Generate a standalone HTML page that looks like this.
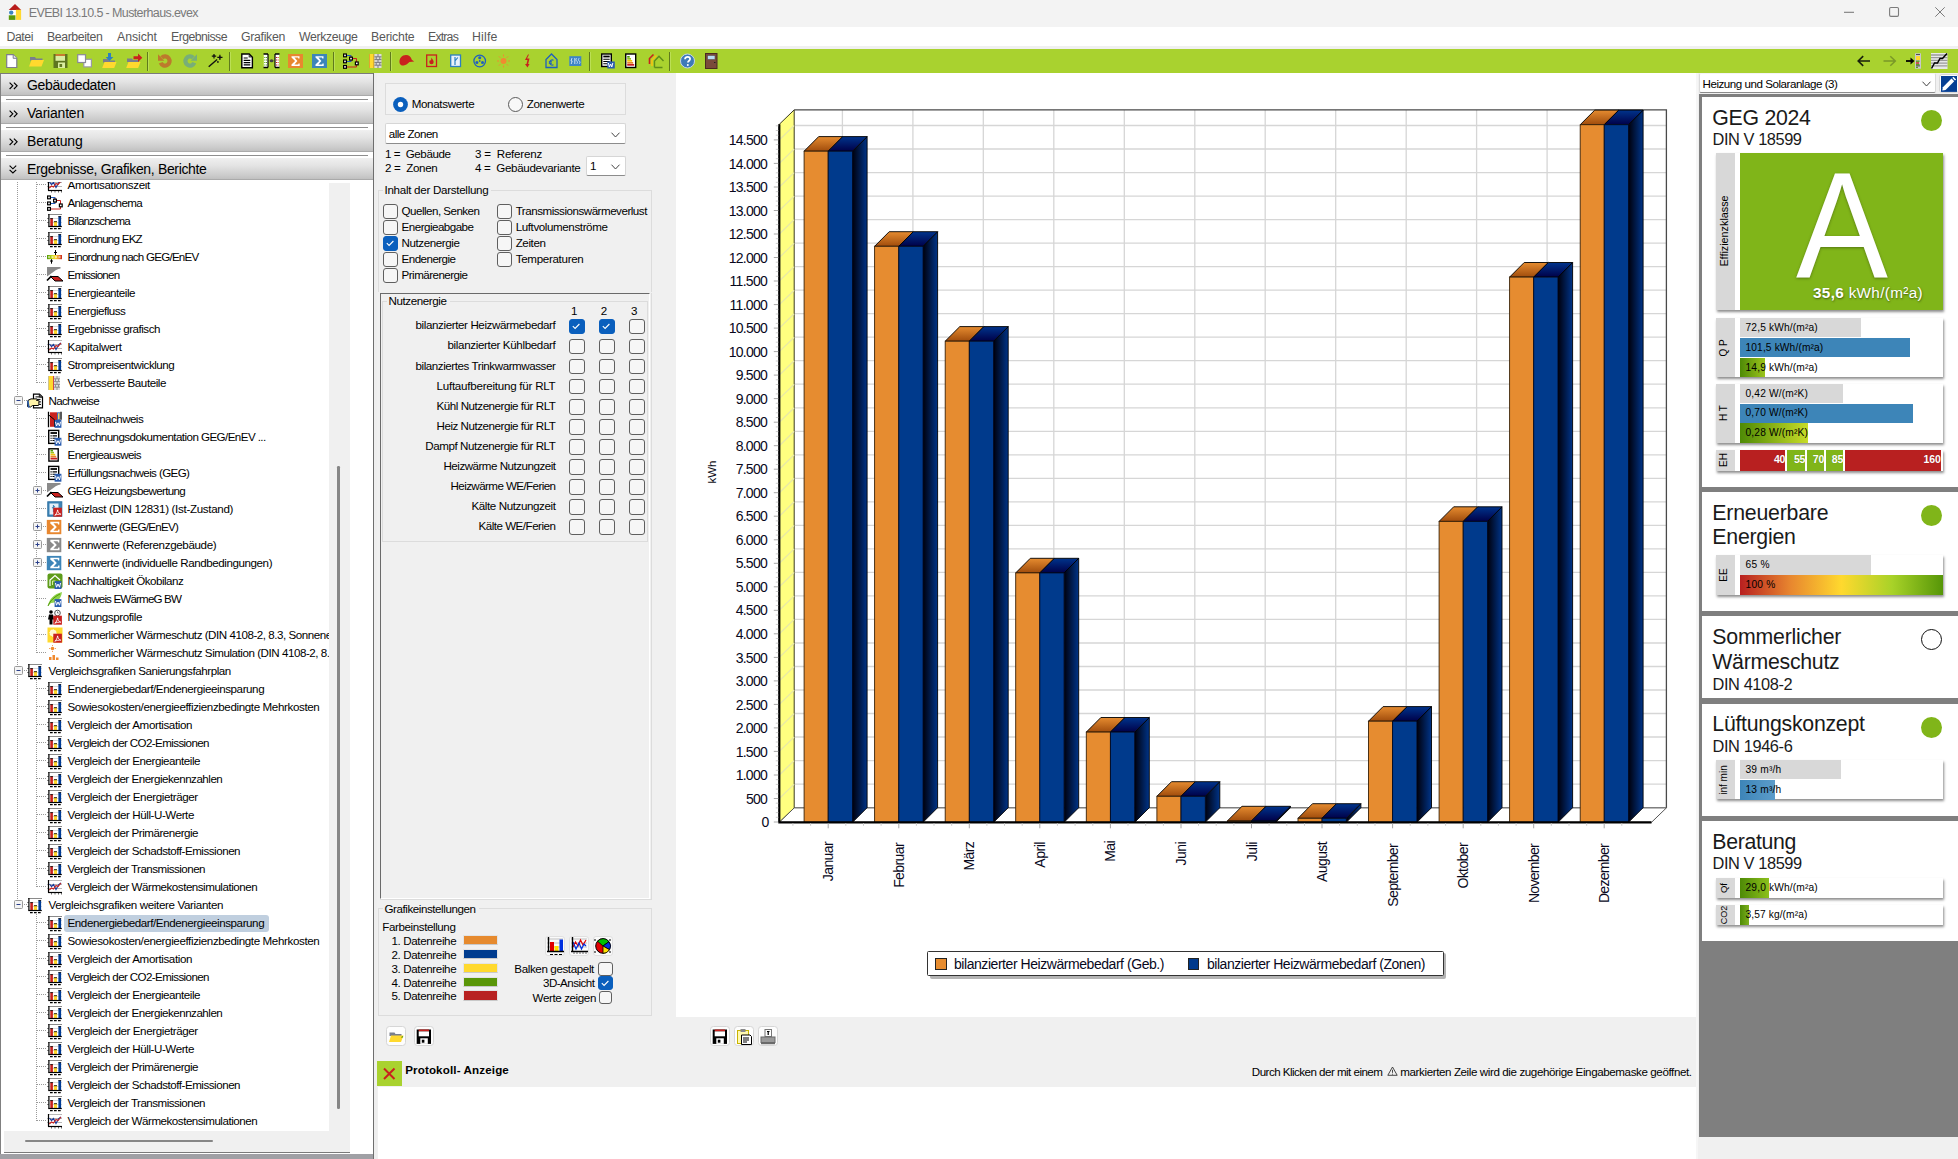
<!DOCTYPE html>
<html lang="de"><head><meta charset="utf-8"><title>EVEBI 13.10.5 - Musterhaus.evex</title>
<style>
html,body{margin:0;padding:0}
body{width:1958px;height:1159px;overflow:hidden;background:#f0f0f0;position:relative;font-family:"Liberation Sans",sans-serif;font-size:11px;color:#000}
.a{position:absolute;box-sizing:border-box}
.t{position:absolute;white-space:pre;}
svg{overflow:visible}
.cb{position:absolute;box-sizing:border-box;width:14px;height:14px;border:1px solid #5f5f5f;border-radius:3px;background:#f6f6f6}
.cb.on{background:#0a5fbd;border-color:#0a5fbd}
.gb{position:absolute;box-sizing:border-box;border:1px solid #dcdcdc}
</style></head>
<body>
<!-- frame -->
<div class="a " style="left:0.0px;top:0.0px;width:1958.0px;height:27.4px;background:#f3f3f3"></div>
<svg class="a" style="left:8.0px;top:3.0px;" width="14" height="18" viewBox="0 0 14 18"><rect x="0.800" y="6.800" width="7.100" height="5.500" fill="#fff"/><polygon points="0.700,6.900 7,1 13.200,6.900" fill="#b81c1c"/><rect x="7.900" y="6.800" width="5.200" height="10.100" fill="#ffd92e"/><rect x="0.800" y="12.300" width="6.600" height="4.600" fill="#5a9a08"/><circle cx="3.200" cy="9.600" r="2.200" fill="#3d85c0"/></svg>
<span class="t " style="left:28.7px;top:4.6px;font-size:12.5px;line-height:16px;color:#7a7a7a;letter-spacing:-0.613px;">EVEBI 13.10.5 - Musterhaus.evex</span>
<svg class="a" style="left:1840.0px;top:4.0px;" width="112" height="18" viewBox="0 0 112 18"><path d="M4 8.300H14" stroke="#7c7c7c" stroke-width="1.100" fill="none"/><rect x="49.600" y="3.500" width="8.900" height="8.900" fill="none" stroke="#7c7c7c" stroke-width="1.100" rx="1.300"/><path d="M95.300 3.300l9.400 9.400M104.700 3.300l-9.400 9.400" stroke="#7c7c7c" stroke-width="1" fill="none"/></svg>
<div class="a " style="left:0.0px;top:27.4px;width:1958.0px;height:19.0px;background:#fff"></div>
<div class="a " style="left:0.0px;top:46.4px;width:1958.0px;height:2.6px;background:#f0f0f0"></div>
<span class="t " style="left:6.5px;top:29.3px;font-size:12.3px;line-height:16px;color:#585858;letter-spacing:-0.443px;">Datei</span>
<span class="t " style="left:47.0px;top:29.3px;font-size:12.3px;line-height:16px;color:#585858;letter-spacing:-0.400px;">Bearbeiten</span>
<span class="t " style="left:117.0px;top:29.3px;font-size:12.3px;line-height:16px;color:#585858;letter-spacing:-0.048px;">Ansicht</span>
<span class="t " style="left:171.0px;top:29.3px;font-size:12.3px;line-height:16px;color:#585858;letter-spacing:-0.554px;">Ergebnisse</span>
<span class="t " style="left:241.0px;top:29.3px;font-size:12.3px;line-height:16px;color:#585858;letter-spacing:-0.311px;">Grafiken</span>
<span class="t " style="left:299.0px;top:29.3px;font-size:12.3px;line-height:16px;color:#585858;letter-spacing:-0.388px;">Werkzeuge</span>
<span class="t " style="left:371.0px;top:29.3px;font-size:12.3px;line-height:16px;color:#585858;letter-spacing:-0.203px;">Berichte</span>
<span class="t " style="left:428.0px;top:29.3px;font-size:12.3px;line-height:16px;color:#585858;letter-spacing:-0.810px;">Extras</span>
<span class="t " style="left:472.0px;top:29.3px;font-size:12.3px;line-height:16px;color:#585858;letter-spacing:0.179px;">Hilfe</span>
<div class="a " style="left:0.0px;top:49.0px;width:1958.0px;height:24.0px;background:#a9d22f"></div>
<div class="a " style="left:147.0px;top:51.5px;width:1.1px;height:19.5px;background:#5f7a1c"></div>
<div class="a " style="left:148.1px;top:51.5px;width:1.0px;height:19.5px;background:#bbdf55"></div>
<div class="a " style="left:229.0px;top:51.5px;width:1.1px;height:19.5px;background:#5f7a1c"></div>
<div class="a " style="left:230.1px;top:51.5px;width:1.0px;height:19.5px;background:#bbdf55"></div>
<div class="a " style="left:333.2px;top:51.5px;width:1.1px;height:19.5px;background:#5f7a1c"></div>
<div class="a " style="left:334.3px;top:51.5px;width:1.0px;height:19.5px;background:#bbdf55"></div>
<div class="a " style="left:390.0px;top:51.5px;width:1.1px;height:19.5px;background:#5f7a1c"></div>
<div class="a " style="left:391.1px;top:51.5px;width:1.0px;height:19.5px;background:#bbdf55"></div>
<div class="a " style="left:589.0px;top:51.5px;width:1.1px;height:19.5px;background:#5f7a1c"></div>
<div class="a " style="left:590.1px;top:51.5px;width:1.0px;height:19.5px;background:#bbdf55"></div>
<div class="a " style="left:669.0px;top:51.5px;width:1.1px;height:19.5px;background:#5f7a1c"></div>
<div class="a " style="left:670.1px;top:51.5px;width:1.0px;height:19.5px;background:#bbdf55"></div>
<!-- toolbar -->
<svg class="a" style="left:5.5px;top:53.0px;" width="16" height="16" viewBox="0 0 16 16"><path d="M0.7 1.7h6.5l3.6 3.6v9.2h-10.1z" fill="#fff" stroke="#7d7d8c" stroke-width="1.2"/><path d="M7.2 1.7v3.6h3.6" fill="#e8e8ee" stroke="#7d7d8c" stroke-width="1"/></svg>
<svg class="a" style="left:28.5px;top:53.0px;" width="16" height="16" viewBox="0 0 16 16"><path d="M1 4h5l1 1.5h6.5v2h-12.5z" fill="#7a7f8c"/><path d="M2.5 7h12.5l-2.5 6.5h-12.5z" fill="#ffd92e"/></svg>
<svg class="a" style="left:52.5px;top:53.0px;" width="16" height="16" viewBox="0 0 16 16"><rect x="0.5" y="1" width="14" height="14" fill="#5e7520"/><rect x="2.5" y="1" width="9.5" height="2" fill="#c87a30"/><rect x="2.5" y="3" width="9.5" height="4.8" fill="#d9eda0"/><rect x="5" y="9.5" width="7" height="5.5" fill="#d9eda0"/><rect x="6.5" y="11" width="2.6" height="3" fill="#5e7520"/></svg>
<svg class="a" style="left:77.0px;top:53.0px;" width="16" height="16" viewBox="0 0 16 16"><rect x="6.8" y="6.3" width="7.6" height="7.6" fill="#fff" stroke="#9a9aa4" stroke-width="1.2"/><rect x="0.7" y="1.7" width="7.8" height="7.8" fill="#fff" stroke="#8a8a96" stroke-width="1.2"/></svg>
<svg class="a" style="left:101.5px;top:53.0px;" width="16" height="16" viewBox="0 0 16 16"><path d="M1 6h5l1 1.5h6v2h-12z" fill="#7a7f8c"/><path d="M2.5 9h12l-2.3 6h-12z" fill="#ffd92e"/><path d="M6 0h3v4h2.4l-3.9 4l-3.9-4h2.4z" fill="#2d7fc1"/></svg>
<svg class="a" style="left:126.0px;top:53.0px;" width="16" height="16" viewBox="0 0 16 16"><path d="M1 5.5h5l1 1.5h6v2h-12z" fill="#7a7f8c"/><path d="M2.5 9h12l-2.3 6h-12z" fill="#ffd92e"/><path d="M7.5 3.2h4.5v-2.7l4.3 4.2l-4.3 4.2v-2.7h-4.5z" fill="#c9211e"/></svg>
<svg class="a" style="left:158.1px;top:54.1px;" width="14" height="14" viewBox="0 0 14 14"><path d="M3.750 3.750A4.600 4.600 0 1 1 2.700 8.800" fill="none" stroke="#bd7a2c" stroke-width="4.200"/><path d="M0 0.300v6.500h6.200z" fill="#bd7a2c"/></svg>
<svg class="a" style="left:183.2px;top:54.1px;" width="14" height="14" viewBox="0 0 14 14"><path d="M10.250 3.750A4.600 4.600 0 1 0 11.300 8.800" fill="none" stroke="#78ae78" stroke-width="4.200"/><path d="M14 0.300v6.500h-6.200z" fill="#78ae78"/></svg>
<svg class="a" style="left:207.5px;top:53.0px;" width="16" height="16" viewBox="0 0 16 16"><path d="M0.700 13.800l8.400-7.300" stroke="#111" stroke-width="1.400"/><path d="M6 1v4.400M3.800 3.200h4.400M11.900 1.800v5.200M9.300 4.400h5.200" stroke="#111" stroke-width="1.200"/><path d="M6 1.800l.7 .7l-.7 .7l-.7-.7zM11.900 3l1.400 1.400l-1.400 1.400l-1.400-1.400z" fill="#111"/><circle cx="9.900" cy="8.900" r=".9" fill="#111"/></svg>
<svg class="a" style="left:241.0px;top:53.0px;" width="16" height="16" viewBox="0 0 16 16"><path d="M0.8 1h7.4l3.2 3.2v10.5h-10.6z" fill="#fff" stroke="#000" stroke-width="1.4"/><path d="M2.7 5h4M2.7 7.3h6.6M2.7 9.6h6.6M2.7 11.9h6.6" stroke="#000" stroke-width="1.2"/><path d="M7.6 1.2l3.4 3.4h-3.4z" fill="#444"/></svg>
<svg class="a" style="left:262.5px;top:53.0px;" width="17" height="16" viewBox="0 0 17 16"><rect x="0.8" y="1" width="4.2" height="13.5" fill="#fff"/><path d="M0.5 1h4.5M0.5 14.5h4.5" stroke="#000" stroke-width="1.4"/><path d="M5 1v13.5" stroke="#000" stroke-width="1.2"/><path d="M1.3 4.5h3M1.3 7h3M1.3 9.5h3M1.3 12h3" stroke="#4e9a06" stroke-width="1.2" stroke-dasharray="1 0.6"/><ellipse cx="8.6" cy="7.7" rx="2" ry="1.5" fill="#444"/><rect x="12" y="1" width="4.2" height="13.5" fill="#fff"/><path d="M12 1h4.5M12 14.5h4.5" stroke="#000" stroke-width="1.4"/><path d="M12 1v13.5" stroke="#000" stroke-width="1.2"/><path d="M13 4.5h3M13 7h3M13 9.5h3M13 12h3" stroke="#c9211e" stroke-width="1.2" stroke-dasharray="1 0.6"/></svg>
<svg class="a" style="left:288.0px;top:53.0px;" width="16" height="16" viewBox="0 0 16 16"><rect x="0" y="1" width="15" height="14" fill="#e8872f"/><path d="M3.5 3.2h8v2.2h-1.2l-.3-.9h-3.6l3 3.5l-3 3.6h3.8l.3-1h1.2v2.3h-8.2v-1.4l3.6-3.6l-3.6-3.4z" fill="#fff"/></svg>
<svg class="a" style="left:312.0px;top:53.0px;" width="16" height="16" viewBox="0 0 16 16"><rect x="0" y="1" width="15" height="14" fill="#3d85b8"/><path d="M3.5 3.2h8v2.2h-1.2l-.3-.9h-3.6l3 3.5l-3 3.6h3.8l.3-1h1.2v2.3h-8.2v-1.4l3.6-3.6l-3.6-3.4z" fill="#fff"/></svg>
<svg class="a" style="left:343.0px;top:53.0px;" width="16" height="16" viewBox="0 0 16 16"><path d="M2 2.5h6v3.5M2 8.5h6v-3M8 5.5h5.5v5M2 14h11.5v-3.5" fill="none" stroke="#c9211e" stroke-width="1"/><path d="M2 2.5h6v3.5M2 8.5h6v-2.5" fill="none" stroke="#1f5fbf" stroke-width="1"/><g fill="#fff" stroke="#000" stroke-width="1.2"><rect x="0.6" y="1" width="2.8" height="2.8"/><rect x="0.6" y="7" width="2.8" height="2.8"/><rect x="0.6" y="12.5" width="2.8" height="2.8"/><rect x="6.6" y="4.2" width="2.8" height="2.8"/><rect x="12.4" y="9" width="2.8" height="2.8"/></g></svg>
<svg class="a" style="left:368.5px;top:53.0px;" width="13" height="16" viewBox="0 0 13 16"><rect x="0" y="1" width="0.800" height="14" fill="#e8872f"/><rect x="0.800" y="1" width="3.700" height="14" fill="#ffd92e"/><rect x="4.500" y="1" width="0.900" height="14" fill="#e8872f"/><rect x="5.400" y="1" width="7.100" height="14" fill="#dcdcdc"/><path d="M5.400 3.800h7.100M5.400 6.600h7.100M5.400 9.400h7.100M5.400 12.200h7.100M9 1v2.800M7.200 3.800v2.800M10.800 3.800v2.800M9 6.600v2.800M7.200 9.400v2.800M10.800 9.400v2.800M9 12.200v2.800" stroke="#7a7a82" stroke-width="1"/></svg>
<svg class="a" style="left:399.0px;top:53.0px;" width="15" height="16" viewBox="0 0 15 16"><path d="M0.5 9.5c-.5-4 2.5-7.5 6.5-7.5c3 0 5 2 5.8 4.8l2.4 1.6l-4.7.6c-1.500 1.500-3.5 3-6 3.500c-1.500.3-3.700-.500-4-3z" fill="#c9211e"/></svg>
<svg class="a" style="left:425.5px;top:53.0px;" width="12" height="16" viewBox="0 0 12 16"><rect x="0.7" y="2" width="9.800" height="11.500" fill="#a9d22f" stroke="#c9211e" stroke-width="1.300"/><path d="M5.500 4.500c.3 1.500 2.200 2.500 2.200 4.500a2.200 2.200 0 0 1-4.400 0c0-1 .6-1.600.9-2.300c.3.600.5.900.8 1c.2-1.200.2-2.200.5-3.200z" fill="#c9211e"/></svg>
<svg class="a" style="left:449.5px;top:53.0px;" width="12" height="16" viewBox="0 0 12 16"><rect x="0.7" y="2" width="9.800" height="11.500" fill="#e9f2fa" stroke="#2d7fc1" stroke-width="1.300"/><path d="M5 4v8M5 8l2.800-3.500" stroke="#2d7fc1" stroke-width="1.200" fill="none"/></svg>
<svg class="a" style="left:472.5px;top:53.0px;" width="14" height="16" viewBox="0 0 14 16"><circle cx="6.700" cy="8" r="5.800" fill="none" stroke="#1f5fbf" stroke-width="1.300"/><circle cx="6.700" cy="4.800" r="1.500" fill="#1f5fbf"/><circle cx="3.900" cy="9.500" r="1.500" fill="#1f5fbf"/><circle cx="9.500" cy="9.500" r="1.500" fill="#1f5fbf"/><circle cx="6.700" cy="8" r=".9" fill="#1f5fbf"/></svg>
<svg class="a" style="left:496.5px;top:53.0px;" width="13" height="16" viewBox="0 0 13 16"><circle cx="6.500" cy="8" r="3" fill="#f08a30"/><path d="M6.500 1.500v2M6.500 12.500v2M0 8h2M11 8h2M1.900 3.400l1.400 1.400M9.700 11.200l1.400 1.400M1.900 12.600l1.400-1.400M9.700 4.800l1.400-1.400" stroke="#f08a30" stroke-width="1"/></svg>
<svg class="a" style="left:523.0px;top:53.0px;" width="9" height="16" viewBox="0 0 9 16"><path d="M5 1.500l-3 5.500h2.500l-1 4h-1.500l2.500 3.500l2-3.500h-1.400l1.400-5.500h-2.500l2-4z" fill="#c9211e"/></svg>
<svg class="a" style="left:544.5px;top:53.0px;" width="13" height="16" viewBox="0 0 13 16"><path d="M1 14.500v-8l5.500-5.500l5.500 5.500v8z" fill="none" stroke="#1f5fbf" stroke-width="1.300"/><path d="M8.500 7.200a2.600 2.600 0 1 0 0 4.600M3.800 8.800h3.200M3.800 10.200h3.200" fill="none" stroke="#1f5fbf" stroke-width="1.100"/></svg>
<svg class="a" style="left:569.0px;top:53.0px;" width="13" height="16" viewBox="0 0 13 16"><rect x="0.300" y="3.200" width="12" height="9.800" fill="#3d85c6"/><path d="M3 5l-1 3h1.200l-1 3M5.800 5v6M7.700 5.200c-1 .8-1 2 0 2.800s1 2 0 2.800M10.200 5.200c-1 .8-1 2 0 2.800s1 2 0 2.800" stroke="#d8e8f6" stroke-width=".9" fill="none"/></svg>
<svg class="a" style="left:601.0px;top:53.0px;" width="14" height="16" viewBox="0 0 14 16"><rect x="0.700" y="1" width="9.600" height="12.500" fill="#fff" stroke="#000" stroke-width="1.400"/><path d="M2.300 3.500h6.400" stroke="#000" stroke-width="1.800"/><path d="M2.300 6.300h6.400M2.300 8.500h6.400M2.300 10.700h4" stroke="#000" stroke-width="1.100"/><rect x="6.300" y="8.500" width="7.500" height="7" fill="#2a5db0"/><path d="M7.400 10l1 4l1.200-3l1.200 3l1-4" fill="none" stroke="#fff" stroke-width="1"/></svg>
<svg class="a" style="left:624.5px;top:53.0px;" width="12" height="16" viewBox="0 0 12 16"><rect x="0.700" y="1" width="10" height="13.500" fill="#fff" stroke="#000" stroke-width="1.400"/><rect x="2.200" y="3" width="2.500" height="1.700" fill="#4e9a06"/><rect x="2.200" y="5" width="3.800" height="1.700" fill="#9ac31c"/><rect x="2.200" y="7" width="5" height="1.700" fill="#f5c211"/><rect x="2.200" y="9" width="6" height="1.700" fill="#e8872f"/><rect x="2.200" y="11" width="7" height="1.700" fill="#c9211e"/></svg>
<svg class="a" style="left:647.5px;top:53.0px;" width="16" height="16" viewBox="0 0 16 16"><path d="M1.500 11v-5.500l4-4" fill="none" stroke="#c9211e" stroke-width="1.600"/><path d="M4 13v-6l4.500-4.500" fill="none" stroke="#f5c211" stroke-width="1.600"/><path d="M6.500 14.500v-6.500l4.500-4.800l4.500 4.800M6.500 14.500h8" fill="none" stroke="#5e8c1a" stroke-width="1.400"/></svg>
<svg class="a" style="left:679.5px;top:53.0px;" width="15" height="16" viewBox="0 0 15 16"><circle cx="7.500" cy="8" r="7" fill="#3d7ab8" stroke="#c5d5e8" stroke-width="1"/><path d="M5 6.300c0-1.600 1.200-2.500 2.600-2.500s2.500.900 2.500 2.200c0 1.700-2.200 1.800-2.200 3.600" fill="none" stroke="#fff" stroke-width="1.700"/><circle cx="7.800" cy="12" r="1" fill="#fff"/></svg>
<svg class="a" style="left:704.5px;top:53.0px;" width="12" height="16" viewBox="0 0 12 16"><rect x="0.500" y="0.500" width="11.500" height="15" fill="#7a4a3a" stroke="#4a2a20" stroke-width="1"/><rect x="2.500" y="2.500" width="7.500" height="4" fill="#b8dcf0" stroke="#5a4a4a" stroke-width=".6"/><path d="M9 9.500h1.500" stroke="#222" stroke-width="1"/></svg>
<svg class="a" style="left:1857.0px;top:54.0px;" width="14" height="14" viewBox="0 0 14 14"><path d="M13 7h-11.500M6.200 2.200l-5 4.800l5 4.800" fill="none" stroke="#18200c" stroke-width="1.600"/></svg>
<svg class="a" style="left:1882.5px;top:54.0px;" width="14" height="14" viewBox="0 0 14 14"><path d="M0.500 7h11.500M7.300 2.200l5 4.800l-5 4.800" fill="none" stroke="#7a9828" stroke-width="1.500"/></svg>
<svg class="a" style="left:1905.5px;top:53.0px;" width="16" height="16" viewBox="0 0 16 16"><path d="M0 8h5.500" stroke="#000" stroke-width="1.800"/><path d="M4.500 4.500l4 3.500l-4 3.500z" fill="#000"/><rect x="9" y="0.300" width="6" height="15.400" fill="#c8c8cc"/><rect x="10" y="3" width="4" height="4" fill="#ffd92e"/><rect x="10" y="7.500" width="3.500" height="1.400" fill="#5aa020"/><rect x="10" y="9.300" width="3" height="1.400" fill="#c9211e"/><rect x="10" y="11" width="3.500" height="1.400" fill="#5aa020"/><rect x="10" y="13.800" width="2" height="1.200" fill="#5aa020"/><path d="M10 1.500h4M10 12.900h4" stroke="#444" stroke-width=".9"/></svg>
<svg class="a" style="left:1931.0px;top:53.0px;" width="17" height="16" viewBox="0 0 17 16"><rect x="0" y="0" width="16.500" height="16" fill="#e8e8e8"/><path d="M0 2h16.500M0 4.700h16.500M0 7.400h16.500M0 10.100h16.500M0 12.800h16.500" stroke="#9a9a9a" stroke-width="1.300"/><path d="M0.500 15.500l3-5.500h3l2.500-4.500h2.500l4.500-5" fill="none" stroke="#000" stroke-width="1.500"/></svg>
<!-- left -->
<div class="a " style="left:0.0px;top:73.0px;width:373.0px;height:1086.0px;background:#fff"></div>
<div class="a " style="left:0.0px;top:73.0px;width:1.2px;height:1086.0px;background:#808080"></div>
<div class="a " style="left:373.0px;top:73.0px;width:1.1px;height:1086.0px;background:#6e6e6e"></div>
<div class="a " style="left:374.1px;top:73.0px;width:3.3px;height:1086.0px;background:#eeeeee"></div>
<div class="a " style="left:0.0px;top:73.0px;width:373.0px;height:1.3px;background:#7a7a7a"></div>
<div class="a " style="left:1.2px;top:74.0px;width:371.5px;height:21.8px;background:linear-gradient(#f0f0f0,#e4e4e4 35%,#cacaca 85%,#c0c0c0);border-bottom:1px solid #aaaaaa"></div>
<svg class="a" style="left:8.8px;top:81.5px;" width="9" height="8" viewBox="0 0 9 8"><path d="M0.600 0.600l3.200 3.200l-3.200 3.200M4.900 0.600l3.200 3.200l-3.200 3.200" fill="none" stroke="#000" stroke-width="1.150"/></svg>
<span class="t " style="left:27.0px;top:75.5px;font-size:14px;line-height:18px;color:#000;letter-spacing:-0.354px;">Gebäudedaten</span>
<div class="a " style="left:1.2px;top:102.0px;width:371.5px;height:21.8px;background:linear-gradient(#f0f0f0,#e4e4e4 35%,#cacaca 85%,#c0c0c0);border-bottom:1px solid #aaaaaa"></div>
<svg class="a" style="left:8.8px;top:109.5px;" width="9" height="8" viewBox="0 0 9 8"><path d="M0.600 0.600l3.200 3.200l-3.200 3.200M4.900 0.600l3.200 3.200l-3.200 3.200" fill="none" stroke="#000" stroke-width="1.150"/></svg>
<span class="t " style="left:27.0px;top:103.5px;font-size:14px;line-height:18px;color:#000;letter-spacing:-0.210px;">Varianten</span>
<div class="a " style="left:1.2px;top:130.0px;width:371.5px;height:21.8px;background:linear-gradient(#f0f0f0,#e4e4e4 35%,#cacaca 85%,#c0c0c0);border-bottom:1px solid #aaaaaa"></div>
<svg class="a" style="left:8.8px;top:137.5px;" width="9" height="8" viewBox="0 0 9 8"><path d="M0.600 0.600l3.200 3.200l-3.200 3.200M4.900 0.600l3.200 3.200l-3.200 3.200" fill="none" stroke="#000" stroke-width="1.150"/></svg>
<span class="t " style="left:27.0px;top:131.5px;font-size:14px;line-height:18px;color:#000;letter-spacing:-0.165px;">Beratung</span>
<div class="a " style="left:1.2px;top:158.0px;width:371.5px;height:21.8px;background:linear-gradient(#f0f0f0,#e4e4e4 35%,#cacaca 85%,#c0c0c0);border-bottom:1px solid #aaaaaa"></div>
<svg class="a" style="left:9.2px;top:165.0px;" width="8" height="9" viewBox="0 0 8 9"><path d="M0.600 0.600l3.300 3.200l3.300-3.200M0.600 4.800l3.300 3.200l3.300-3.200" fill="none" stroke="#000" stroke-width="1.150"/></svg>
<span class="t " style="left:27.0px;top:159.5px;font-size:14px;line-height:18px;color:#000;letter-spacing:-0.346px;">Ergebnisse, Grafiken, Berichte</span>
<div class="a " style="left:6.0px;top:99.0px;width:362.0px;height:1.2px;background:#8e8e8e"></div>
<div class="a " style="left:6.0px;top:127.0px;width:362.0px;height:1.2px;background:#8e8e8e"></div>
<div class="a " style="left:6.0px;top:155.0px;width:362.0px;height:1.2px;background:#8e8e8e"></div>
<div class="a " style="left:0.0px;top:182.0px;width:329.0px;height:949.0px;overflow:hidden"><div class="a " style="left:17.0px;top:0.0px;width:1.0px;height:723.0px;background-image:linear-gradient(to bottom,#9a9a9a 50%,transparent 50%);background-size:1px 2px"></div><div class="a " style="left:36.0px;top:0.0px;width:1.0px;height:201.0px;background-image:linear-gradient(to bottom,#9a9a9a 50%,transparent 50%);background-size:1px 2px"></div><div class="a " style="left:36.0px;top:228.0px;width:1.0px;height:243.0px;background-image:linear-gradient(to bottom,#9a9a9a 50%,transparent 50%);background-size:1px 2px"></div><div class="a " style="left:36.0px;top:498.0px;width:1.0px;height:207.0px;background-image:linear-gradient(to bottom,#9a9a9a 50%,transparent 50%);background-size:1px 2px"></div><div class="a " style="left:36.0px;top:732.0px;width:1.0px;height:207.0px;background-image:linear-gradient(to bottom,#9a9a9a 50%,transparent 50%);background-size:1px 2px"></div><div class="a " style="left:37.0px;top:2.0px;width:9.0px;height:1.0px;background-image:linear-gradient(to right,#9a9a9a 50%,transparent 50%);background-size:2px 1px"></div><svg class="a" style="left:47.0px;top:-5.0px;" width="16" height="16" viewBox="0 0 16 16"><g transform="translate(0,1)"><path d="M1 0.500h14M0 4.500h15M0 8.500h15" stroke="#b8b8b8" stroke-width="1"/><path d="M2.500 4l2 2.500l2-2l2.500 5l2.500-4.500l2.500-2" fill="none" stroke="#1a3c9c" stroke-width="1.200"/><path d="M2.300 10l2.200-2l2 1l2.500-3.500l2 1l3-3.500" fill="none" stroke="#c9211e" stroke-width="1.100"/><path d="M1.500 0v12.500" stroke="#000" stroke-width="1.200"/><path d="M1 12.500h14" stroke="#000" stroke-width="1.200"/><path d="M4.500 13v1.500M8 13v1.500M11.500 13v1.500M14.500 13v1.500" stroke="#666" stroke-width="1"/></g></svg><span class="t " style="left:67.5px;top:-5.0px;font-size:11.6px;line-height:15px;color:#000;letter-spacing:-0.342px;">Amortisationszeit</span><div class="a " style="left:37.0px;top:20.0px;width:9.0px;height:1.0px;background-image:linear-gradient(to right,#9a9a9a 50%,transparent 50%);background-size:2px 1px"></div><svg class="a" style="left:47.0px;top:13.0px;" width="16" height="16" viewBox="0 0 16 16"><path d="M2 2.500h6v3.500M2 8.500h6v-3M8 5.500h5.500v5M2 14h11.500v-3.500" fill="none" stroke="#c9211e" stroke-width="1"/><path d="M2 2.500h6v3.500M2 8.500h6v-2.500" fill="none" stroke="#1f5fbf" stroke-width="1"/><g fill="#fff" stroke="#000" stroke-width="1.200"><rect x="0.600" y="1" width="2.800" height="2.800"/><rect x="0.600" y="7" width="2.800" height="2.800"/><rect x="0.600" y="12.500" width="2.800" height="2.800"/><rect x="6.600" y="4.200" width="2.800" height="2.800"/><rect x="12.400" y="9" width="2.800" height="2.800"/></g></svg><span class="t " style="left:67.5px;top:13.0px;font-size:11.6px;line-height:15px;color:#000;letter-spacing:-0.669px;">Anlagenschema</span><div class="a " style="left:37.0px;top:38.0px;width:9.0px;height:1.0px;background-image:linear-gradient(to right,#9a9a9a 50%,transparent 50%);background-size:2px 1px"></div><svg class="a" style="left:47.0px;top:31.0px;" width="16" height="16" viewBox="0 0 16 16"><g transform="translate(0,1)"><path d="M1 0.500h14" stroke="#8a8a8a" stroke-width="1"/><path d="M0 4.500h2M0 8.500h2" stroke="#8a8a8a" stroke-width="1"/><path d="M3 4.500h12M3 8.500h12" stroke="#d8d8d8" stroke-width="1"/><rect x="3.300" y="4.300" width="2.600" height="8" fill="#c9211e"/><rect x="6.900" y="7.400" width="3.100" height="5" fill="#ffd92e"/><rect x="11.400" y="2.300" width="2.700" height="10" fill="#003c96"/><path d="M3.300 4.600h2.600M6.900 7.700h3.100M11.400 2.600h2.700" stroke="#111" stroke-width=".9"/><path d="M1.900 0v12.500" stroke="#000" stroke-width="1.200"/><path d="M1.300 12.500h13.500" stroke="#000" stroke-width="1.200"/><path d="M3 14.600h11" stroke="#000" stroke-width="1.200" stroke-dasharray="2.700 1.300"/></g></svg><span class="t " style="left:67.5px;top:31.0px;font-size:11.6px;line-height:15px;color:#000;letter-spacing:-0.809px;">Bilanzschema</span><div class="a " style="left:37.0px;top:56.0px;width:9.0px;height:1.0px;background-image:linear-gradient(to right,#9a9a9a 50%,transparent 50%);background-size:2px 1px"></div><svg class="a" style="left:47.0px;top:49.0px;" width="16" height="16" viewBox="0 0 16 16"><g transform="translate(0,1)"><path d="M1 0.500h14" stroke="#8a8a8a" stroke-width="1"/><path d="M0 4.500h2M0 8.500h2" stroke="#8a8a8a" stroke-width="1"/><path d="M3 4.500h12M3 8.500h12" stroke="#d8d8d8" stroke-width="1"/><rect x="3.300" y="4.300" width="2.600" height="8" fill="#c9211e"/><rect x="6.900" y="7.400" width="3.100" height="5" fill="#ffd92e"/><rect x="11.400" y="2.300" width="2.700" height="10" fill="#003c96"/><path d="M3.300 4.600h2.600M6.900 7.700h3.100M11.400 2.600h2.700" stroke="#111" stroke-width=".9"/><path d="M1.900 0v12.500" stroke="#000" stroke-width="1.200"/><path d="M1.300 12.500h13.500" stroke="#000" stroke-width="1.200"/><path d="M3 14.600h11" stroke="#000" stroke-width="1.200" stroke-dasharray="2.700 1.300"/></g></svg><span class="t " style="left:67.5px;top:49.0px;font-size:11.6px;line-height:15px;color:#000;letter-spacing:-0.759px;">Einordnung EKZ</span><div class="a " style="left:37.0px;top:74.0px;width:9.0px;height:1.0px;background-image:linear-gradient(to right,#9a9a9a 50%,transparent 50%);background-size:2px 1px"></div><svg class="a" style="left:47.0px;top:67.0px;" width="16" height="16" viewBox="0 0 16 16"><defs><linearGradient id="gg4" x1="0" x2="1"><stop offset="0" stop-color="#4e9a06"/><stop offset=".35" stop-color="#c8d820"/><stop offset=".55" stop-color="#ffd92e"/><stop offset=".8" stop-color="#e8872f"/><stop offset="1" stop-color="#c9211e"/></linearGradient></defs><rect x="0" y="6" width="15" height="4.200" fill="url(#gg4)"/><path d="M1 8h13" stroke="#fff" stroke-width="1" stroke-dasharray="2 1.500"/><path d="M8.500 1v5M7 3.500h3M4.500 10.200v4.500M3 12h3" stroke="#000" stroke-width="1"/></svg><span class="t " style="left:67.5px;top:67.0px;font-size:11.6px;line-height:15px;color:#000;letter-spacing:-0.775px;">Einordnung nach GEG/EnEV</span><div class="a " style="left:37.0px;top:92.0px;width:9.0px;height:1.0px;background-image:linear-gradient(to right,#9a9a9a 50%,transparent 50%);background-size:2px 1px"></div><svg class="a" style="left:47.0px;top:85.0px;" width="16" height="16" viewBox="0 0 16 16"><path d="M0 0h13.500v1.500c-3 .500-5 1.500-6.500 3l-7 5z" fill="#8a8a8a"/><path d="M3.500 9.500h7.500l5 4.500h-8z" fill="#c9211e" stroke="#000" stroke-width="1"/><path d="M0 13.500l4.500-4.500" fill="none" stroke="#000" stroke-width="1.700"/></svg><span class="t " style="left:67.5px;top:85.0px;font-size:11.6px;line-height:15px;color:#000;letter-spacing:-0.816px;">Emissionen</span><div class="a " style="left:37.0px;top:110.0px;width:9.0px;height:1.0px;background-image:linear-gradient(to right,#9a9a9a 50%,transparent 50%);background-size:2px 1px"></div><svg class="a" style="left:47.0px;top:103.0px;" width="16" height="16" viewBox="0 0 16 16"><g transform="translate(0,1)"><path d="M1 0.500h14" stroke="#8a8a8a" stroke-width="1"/><path d="M0 4.500h2M0 8.500h2" stroke="#8a8a8a" stroke-width="1"/><path d="M3 4.500h12M3 8.500h12" stroke="#d8d8d8" stroke-width="1"/><rect x="3.300" y="4.300" width="2.600" height="8" fill="#c9211e"/><rect x="6.900" y="7.400" width="3.100" height="5" fill="#ffd92e"/><rect x="11.400" y="2.300" width="2.700" height="10" fill="#003c96"/><path d="M3.300 4.600h2.600M6.900 7.700h3.100M11.400 2.600h2.700" stroke="#111" stroke-width=".9"/><path d="M1.900 0v12.500" stroke="#000" stroke-width="1.200"/><path d="M1.300 12.500h13.500" stroke="#000" stroke-width="1.200"/><path d="M3 14.600h11" stroke="#000" stroke-width="1.200" stroke-dasharray="2.700 1.300"/></g></svg><span class="t " style="left:67.5px;top:103.0px;font-size:11.6px;line-height:15px;color:#000;letter-spacing:-0.476px;">Energieanteile</span><div class="a " style="left:37.0px;top:128.0px;width:9.0px;height:1.0px;background-image:linear-gradient(to right,#9a9a9a 50%,transparent 50%);background-size:2px 1px"></div><svg class="a" style="left:47.0px;top:121.0px;" width="16" height="16" viewBox="0 0 16 16"><g transform="translate(0,1)"><path d="M1 0.500h14" stroke="#8a8a8a" stroke-width="1"/><path d="M0 4.500h2M0 8.500h2" stroke="#8a8a8a" stroke-width="1"/><path d="M3 4.500h12M3 8.500h12" stroke="#d8d8d8" stroke-width="1"/><rect x="3.300" y="4.300" width="2.600" height="8" fill="#c9211e"/><rect x="6.900" y="7.400" width="3.100" height="5" fill="#ffd92e"/><rect x="11.400" y="2.300" width="2.700" height="10" fill="#003c96"/><path d="M3.300 4.600h2.600M6.900 7.700h3.100M11.400 2.600h2.700" stroke="#111" stroke-width=".9"/><path d="M1.900 0v12.500" stroke="#000" stroke-width="1.200"/><path d="M1.300 12.500h13.500" stroke="#000" stroke-width="1.200"/><path d="M3 14.600h11" stroke="#000" stroke-width="1.200" stroke-dasharray="2.700 1.300"/></g></svg><span class="t " style="left:67.5px;top:121.0px;font-size:11.6px;line-height:15px;color:#000;letter-spacing:-0.495px;">Energiefluss</span><div class="a " style="left:37.0px;top:146.0px;width:9.0px;height:1.0px;background-image:linear-gradient(to right,#9a9a9a 50%,transparent 50%);background-size:2px 1px"></div><svg class="a" style="left:47.0px;top:139.0px;" width="16" height="16" viewBox="0 0 16 16"><g transform="translate(0,1)"><path d="M1 0.500h14" stroke="#8a8a8a" stroke-width="1"/><path d="M0 4.500h2M0 8.500h2" stroke="#8a8a8a" stroke-width="1"/><path d="M3 4.500h12M3 8.500h12" stroke="#d8d8d8" stroke-width="1"/><rect x="3.300" y="4.300" width="2.600" height="8" fill="#c9211e"/><rect x="6.900" y="7.400" width="3.100" height="5" fill="#ffd92e"/><rect x="11.400" y="2.300" width="2.700" height="10" fill="#003c96"/><path d="M3.300 4.600h2.600M6.900 7.700h3.100M11.400 2.600h2.700" stroke="#111" stroke-width=".9"/><path d="M1.900 0v12.500" stroke="#000" stroke-width="1.200"/><path d="M1.300 12.500h13.500" stroke="#000" stroke-width="1.200"/><path d="M3 14.600h11" stroke="#000" stroke-width="1.200" stroke-dasharray="2.700 1.300"/></g></svg><span class="t " style="left:67.5px;top:139.0px;font-size:11.6px;line-height:15px;color:#000;letter-spacing:-0.494px;">Ergebnisse grafisch</span><div class="a " style="left:37.0px;top:164.0px;width:9.0px;height:1.0px;background-image:linear-gradient(to right,#9a9a9a 50%,transparent 50%);background-size:2px 1px"></div><svg class="a" style="left:47.0px;top:157.0px;" width="16" height="16" viewBox="0 0 16 16"><g transform="translate(0,1)"><path d="M1 0.500h14M0 4.500h15M0 8.500h15" stroke="#b8b8b8" stroke-width="1"/><path d="M2.500 4l2 2.500l2-2l2.500 5l2.500-4.500l2.500-2" fill="none" stroke="#1a3c9c" stroke-width="1.200"/><path d="M2.300 10l2.200-2l2 1l2.500-3.500l2 1l3-3.500" fill="none" stroke="#c9211e" stroke-width="1.100"/><path d="M1.500 0v12.500" stroke="#000" stroke-width="1.200"/><path d="M1 12.500h14" stroke="#000" stroke-width="1.200"/><path d="M4.500 13v1.500M8 13v1.500M11.500 13v1.500M14.500 13v1.500" stroke="#666" stroke-width="1"/></g></svg><span class="t " style="left:67.5px;top:157.0px;font-size:11.6px;line-height:15px;color:#000;letter-spacing:-0.290px;">Kapitalwert</span><div class="a " style="left:37.0px;top:182.0px;width:9.0px;height:1.0px;background-image:linear-gradient(to right,#9a9a9a 50%,transparent 50%);background-size:2px 1px"></div><svg class="a" style="left:47.0px;top:175.0px;" width="16" height="16" viewBox="0 0 16 16"><g transform="translate(0,1)"><path d="M1 0.500h14" stroke="#8a8a8a" stroke-width="1"/><path d="M0 4.500h2M0 8.500h2" stroke="#8a8a8a" stroke-width="1"/><path d="M3 4.500h12M3 8.500h12" stroke="#d8d8d8" stroke-width="1"/><rect x="3.300" y="4.300" width="2.600" height="8" fill="#c9211e"/><rect x="6.900" y="7.400" width="3.100" height="5" fill="#ffd92e"/><rect x="11.400" y="2.300" width="2.700" height="10" fill="#003c96"/><path d="M3.300 4.600h2.600M6.900 7.700h3.100M11.400 2.600h2.700" stroke="#111" stroke-width=".9"/><path d="M1.900 0v12.500" stroke="#000" stroke-width="1.200"/><path d="M1.300 12.500h13.500" stroke="#000" stroke-width="1.200"/><path d="M3 14.600h11" stroke="#000" stroke-width="1.200" stroke-dasharray="2.700 1.300"/></g></svg><span class="t " style="left:67.5px;top:175.0px;font-size:11.6px;line-height:15px;color:#000;letter-spacing:-0.471px;">Strompreisentwicklung</span><div class="a " style="left:37.0px;top:200.0px;width:9.0px;height:1.0px;background-image:linear-gradient(to right,#9a9a9a 50%,transparent 50%);background-size:2px 1px"></div><svg class="a" style="left:47.0px;top:193.0px;" width="16" height="16" viewBox="0 0 16 16"><g transform="translate(0,0.3)"><rect x="1" y="0.700" width="0.700" height="14" fill="#9a9a9a"/><rect x="1.700" y="0.700" width="4.300" height="14" fill="#ffd92e"/><rect x="6" y="0.700" width="0.900" height="14" fill="#c9211e"/><rect x="6.900" y="0.700" width="6.100" height="14" fill="#dcdcdc"/><path d="M6.900 3.500h6.100M6.900 6.300h6.100M6.900 9.100h6.100M6.900 11.900h6.100M10 0.700v2.800M8.500 3.500v2.800M11.500 3.500v2.800M10 6.300v2.800M8.500 9.100v2.800M11.500 9.100v2.800M10 11.900v2.800" stroke="#8a8a8a" stroke-width=".9"/></g></svg><span class="t " style="left:67.5px;top:193.0px;font-size:11.6px;line-height:15px;color:#000;letter-spacing:-0.422px;">Verbesserte Bauteile</span><div class="a " style="left:18.0px;top:218.0px;width:9.0px;height:1.0px;background-image:linear-gradient(to right,#9a9a9a 50%,transparent 50%);background-size:2px 1px"></div><svg class="a" style="left:13.5px;top:214.0px;" width="9" height="9" viewBox="0 0 9 9"><rect x="0.500" y="0.500" width="8" height="8" rx="1" fill="#f4f4f4" stroke="#9a9a9a" stroke-width="1"/><path d="M2.500 4.500h4" stroke="#2a3f8a" stroke-width="1"/></svg><svg class="a" style="left:27.0px;top:211.0px;" width="16" height="16" viewBox="0 0 16 16"><g transform="translate(0,0.4)"><path d="M6.500 0.700h6l3 3v10.800h-9z" fill="#fff" stroke="#000" stroke-width="1.200"/><path d="M8.500 3.500h3.500M8.500 6h5M11 8.500h3M11 11h3" stroke="#000" stroke-width="1"/><path d="M12.300 0.900v3h3" fill="#555" stroke="#000" stroke-width=".8"/><path d="M1 7l3-1.500h5.500c1 0 1 1.300 0 1.500h2c1 0 1 1.500 0 1.700c1 .200 1 1.600 0 1.800c.800.300.600 1.600-.300 1.600h-5.700l-2 1.500l-3-.500z" fill="#fff3a8" stroke="#000" stroke-width="1"/><path d="M0 7.500l1.500-.700l1.200 7l-1.700.500z" fill="#2a5db0"/></g></svg><span class="t " style="left:48.5px;top:211.0px;font-size:11.6px;line-height:15px;color:#000;letter-spacing:-0.693px;">Nachweise</span><div class="a " style="left:37.0px;top:236.0px;width:9.0px;height:1.0px;background-image:linear-gradient(to right,#9a9a9a 50%,transparent 50%);background-size:2px 1px"></div><svg class="a" style="left:47.0px;top:229.0px;" width="16" height="16" viewBox="0 0 16 16"><g transform="translate(0,0.8)"><rect x="3" y="0.500" width="7" height="14.500" fill="#c9211e"/><rect x="10" y="0.500" width="3" height="8" fill="#3d6ab8"/><rect x="11" y="1.500" width="1.500" height="6" fill="#f0d060"/><path d="M1.500 0v15.500M14 0v8" stroke="#000" stroke-width="1.300"/><path d="M1.500 3l6 5v7" fill="none" stroke="#000" stroke-width="1"/><rect x="7.600" y="8.100" width="6.800" height="7.900" fill="#2a5db0"/><path d="M8.500 10l1 4.200l1.500-3.200l1.500 3.200l1-4.200" fill="none" stroke="#fff" stroke-width="1"/></g></svg><span class="t " style="left:67.5px;top:229.0px;font-size:11.6px;line-height:15px;color:#000;letter-spacing:-0.542px;">Bauteilnachweis</span><div class="a " style="left:37.0px;top:254.0px;width:9.0px;height:1.0px;background-image:linear-gradient(to right,#9a9a9a 50%,transparent 50%);background-size:2px 1px"></div><svg class="a" style="left:47.0px;top:247.0px;" width="16" height="16" viewBox="0 0 16 16"><g transform="translate(0,0.7)"><rect x="1.700" y="0.700" width="10" height="13" fill="#fff" stroke="#000" stroke-width="1.400"/><path d="M3.500 3.300h6.500" stroke="#000" stroke-width="1.800"/><path d="M3.500 6.200h1.200M5.500 6.200h4.500M3.500 8.500h1.200M5.500 8.500h3M3.500 10.800h1.200M5.500 10.800h2" stroke="#000" stroke-width="1.100"/><rect x="7.600" y="8.100" width="6.800" height="7.900" fill="#2a5db0"/><path d="M8.500 10l1 4.200l1.500-3.200l1.500 3.200l1-4.200" fill="none" stroke="#fff" stroke-width="1"/></g></svg><span class="t " style="left:67.5px;top:247.0px;font-size:11.6px;line-height:15px;color:#000;letter-spacing:-0.566px;">Berechnungsdokumentation GEG/EnEV ...</span><div class="a " style="left:37.0px;top:272.0px;width:9.0px;height:1.0px;background-image:linear-gradient(to right,#9a9a9a 50%,transparent 50%);background-size:2px 1px"></div><svg class="a" style="left:47.0px;top:265.0px;" width="16" height="16" viewBox="0 0 16 16"><rect x="1.900" y="1.800" width="9.300" height="12.300" fill="#fff" stroke="#000" stroke-width="1.400"/><rect x="3.500" y="2.800" width="2.500" height="1.700" fill="#4e9a06"/><rect x="3.500" y="4.800" width="3.500" height="1.700" fill="#9ac31c"/><rect x="3.500" y="6.800" width="4.700" height="1.700" fill="#f5c211"/><rect x="3.500" y="8.800" width="5.700" height="1.700" fill="#e8872f"/><rect x="3.500" y="10.800" width="6.700" height="1.700" fill="#c9211e"/></svg><span class="t " style="left:67.5px;top:265.0px;font-size:11.6px;line-height:15px;color:#000;letter-spacing:-0.600px;">Energieausweis</span><div class="a " style="left:37.0px;top:290.0px;width:9.0px;height:1.0px;background-image:linear-gradient(to right,#9a9a9a 50%,transparent 50%);background-size:2px 1px"></div><svg class="a" style="left:47.0px;top:283.0px;" width="16" height="16" viewBox="0 0 16 16"><g transform="translate(0,0.7)"><rect x="1.700" y="0.700" width="10" height="13" fill="#fff" stroke="#000" stroke-width="1.400"/><path d="M3.500 3.300h6.500" stroke="#000" stroke-width="1.800"/><path d="M3.500 6.200h1.200M5.500 6.200h4.500M3.500 8.500h1.200M5.500 8.500h3M3.500 10.800h1.200M5.500 10.800h2" stroke="#000" stroke-width="1.100"/><rect x="7.600" y="8.100" width="6.800" height="7.900" fill="#2a5db0"/><path d="M8.500 10l1 4.200l1.500-3.200l1.500 3.200l1-4.200" fill="none" stroke="#fff" stroke-width="1"/></g></svg><span class="t " style="left:67.5px;top:283.0px;font-size:11.6px;line-height:15px;color:#000;letter-spacing:-0.616px;">Erfüllungsnachweis (GEG)</span><div class="a " style="left:37.0px;top:308.0px;width:9.0px;height:1.0px;background-image:linear-gradient(to right,#9a9a9a 50%,transparent 50%);background-size:2px 1px"></div><svg class="a" style="left:33.0px;top:304.0px;" width="9" height="9" viewBox="0 0 9 9"><rect x="0.500" y="0.500" width="8" height="8" rx="1" fill="#f4f4f4" stroke="#9a9a9a" stroke-width="1"/><path d="M2.500 4.500h4" stroke="#2a3f8a" stroke-width="1"/><path d="M4.500 2.500v4" stroke="#2a3f8a" stroke-width="1"/></svg><svg class="a" style="left:47.0px;top:301.0px;" width="16" height="16" viewBox="0 0 16 16"><path d="M0 0h13.500v1.500c-3 .500-5 1.500-6.500 3l-7 5z" fill="#8a8a8a"/><path d="M3.500 9.500h7.500l5 4.500h-8z" fill="#c9211e" stroke="#000" stroke-width="1"/><path d="M0 13.500l4.500-4.500" fill="none" stroke="#000" stroke-width="1.700"/></svg><span class="t " style="left:67.5px;top:301.0px;font-size:11.6px;line-height:15px;color:#000;letter-spacing:-0.659px;">GEG Heizungsbewertung</span><div class="a " style="left:37.0px;top:326.0px;width:9.0px;height:1.0px;background-image:linear-gradient(to right,#9a9a9a 50%,transparent 50%);background-size:2px 1px"></div><svg class="a" style="left:47.0px;top:319.0px;" width="16" height="16" viewBox="0 0 16 16"><rect x="0.800" y="0.800" width="14" height="14.400" fill="#3d85b8" stroke="#2d6fa0" stroke-width="1"/><rect x="2.500" y="2.500" width="9" height="11" fill="#e4eef8"/><path d="M6.500 4v7M5 7l3-1.500" stroke="#3d85b8" stroke-width="1.200"/><rect x="6.300" y="6.700" width="8.600" height="9" fill="#c9211e"/><path d="M7.800 14.200c1.500-1 2.500-3 2.800-5.300c.2 2 1.500 3.800 3.200 4.300c-2-.200-4.200.200-6 1z" fill="none" stroke="#fff" stroke-width=".9"/></svg><span class="t " style="left:67.5px;top:319.0px;font-size:11.6px;line-height:15px;color:#000;letter-spacing:-0.322px;">Heizlast (DIN 12831) (Ist-Zustand)</span><div class="a " style="left:37.0px;top:344.0px;width:9.0px;height:1.0px;background-image:linear-gradient(to right,#9a9a9a 50%,transparent 50%);background-size:2px 1px"></div><svg class="a" style="left:33.0px;top:340.0px;" width="9" height="9" viewBox="0 0 9 9"><rect x="0.500" y="0.500" width="8" height="8" rx="1" fill="#f4f4f4" stroke="#9a9a9a" stroke-width="1"/><path d="M2.500 4.500h4" stroke="#2a3f8a" stroke-width="1"/><path d="M4.500 2.500v4" stroke="#2a3f8a" stroke-width="1"/></svg><svg class="a" style="left:47.0px;top:337.0px;" width="16" height="16" viewBox="0 0 16 16"><g transform="translate(-0.2,0)"><rect x="0" y="0.900" width="14.500" height="14.300" fill="#e8872f"/><path d="M3.500 2.800h9v2.600h-1.300l-.3-1.100h-4.300l3.400 3.700l-3.400 3.800h4.500l.3-1.200h1.300v2.700h-9.200v-1.500l3.900-3.800l-3.900-3.600z" fill="#fff"/></g></svg><span class="t " style="left:67.5px;top:337.0px;font-size:11.6px;line-height:15px;color:#000;letter-spacing:-0.719px;">Kennwerte (GEG/EnEV)</span><div class="a " style="left:37.0px;top:362.0px;width:9.0px;height:1.0px;background-image:linear-gradient(to right,#9a9a9a 50%,transparent 50%);background-size:2px 1px"></div><svg class="a" style="left:33.0px;top:358.0px;" width="9" height="9" viewBox="0 0 9 9"><rect x="0.500" y="0.500" width="8" height="8" rx="1" fill="#f4f4f4" stroke="#9a9a9a" stroke-width="1"/><path d="M2.500 4.500h4" stroke="#2a3f8a" stroke-width="1"/><path d="M4.500 2.500v4" stroke="#2a3f8a" stroke-width="1"/></svg><svg class="a" style="left:47.0px;top:355.0px;" width="16" height="16" viewBox="0 0 16 16"><g transform="translate(-0.2,0)"><rect x="0" y="0.900" width="14.500" height="14.300" fill="#8a8a8a"/><path d="M3.500 2.800h9v2.600h-1.300l-.3-1.100h-4.300l3.400 3.700l-3.400 3.800h4.500l.3-1.200h1.300v2.700h-9.200v-1.500l3.900-3.800l-3.900-3.600z" fill="#fff"/></g></svg><span class="t " style="left:67.5px;top:355.0px;font-size:11.6px;line-height:15px;color:#000;letter-spacing:-0.364px;">Kennwerte (Referenzgebäude)</span><div class="a " style="left:37.0px;top:380.0px;width:9.0px;height:1.0px;background-image:linear-gradient(to right,#9a9a9a 50%,transparent 50%);background-size:2px 1px"></div><svg class="a" style="left:33.0px;top:376.0px;" width="9" height="9" viewBox="0 0 9 9"><rect x="0.500" y="0.500" width="8" height="8" rx="1" fill="#f4f4f4" stroke="#9a9a9a" stroke-width="1"/><path d="M2.500 4.500h4" stroke="#2a3f8a" stroke-width="1"/><path d="M4.500 2.500v4" stroke="#2a3f8a" stroke-width="1"/></svg><svg class="a" style="left:47.0px;top:373.0px;" width="16" height="16" viewBox="0 0 16 16"><g transform="translate(-0.2,0)"><rect x="0" y="0.900" width="14.500" height="14.300" fill="#3d85b8"/><path d="M3.500 2.800h9v2.600h-1.300l-.3-1.100h-4.300l3.400 3.700l-3.400 3.800h4.500l.3-1.200h1.300v2.700h-9.200v-1.500l3.900-3.800l-3.900-3.600z" fill="#fff"/></g></svg><span class="t " style="left:67.5px;top:373.0px;font-size:11.6px;line-height:15px;color:#000;letter-spacing:-0.429px;">Kennwerte (individuelle Randbedingungen)</span><div class="a " style="left:37.0px;top:398.0px;width:9.0px;height:1.0px;background-image:linear-gradient(to right,#9a9a9a 50%,transparent 50%);background-size:2px 1px"></div><svg class="a" style="left:47.0px;top:391.0px;" width="16" height="16" viewBox="0 0 16 16"><rect x="0.500" y="0.500" width="15" height="15" rx="2" fill="#5e9c1a"/><path d="M3 13v-6l5-4.500l5 4.500" fill="none" stroke="#fff" stroke-width="1.200"/><path d="M5.500 12v-4h3" fill="none" stroke="#d8f0a0" stroke-width="1"/><rect x="7.600" y="8.100" width="6.800" height="7.900" fill="#2a5db0"/><path d="M8.500 10l1 4.200l1.500-3.200l1.500 3.200l1-4.200" fill="none" stroke="#fff" stroke-width="1"/></svg><span class="t " style="left:67.5px;top:391.0px;font-size:11.6px;line-height:15px;color:#000;letter-spacing:-0.490px;">Nachhaltigkeit Ökobilanz</span><div class="a " style="left:37.0px;top:416.0px;width:9.0px;height:1.0px;background-image:linear-gradient(to right,#9a9a9a 50%,transparent 50%);background-size:2px 1px"></div><svg class="a" style="left:47.0px;top:409.0px;" width="16" height="16" viewBox="0 0 16 16"><path d="M1 15c1-7 6-12 14-14c-1 7-5 11-11 11z" fill="#8fd14a"/><path d="M1 15c2-5 6-9 12-12" fill="none" stroke="#4e9a06" stroke-width="1"/><rect x="7.600" y="8.100" width="6.800" height="7.900" fill="#2a5db0"/><path d="M8.500 10l1 4.200l1.500-3.200l1.500 3.200l1-4.200" fill="none" stroke="#fff" stroke-width="1"/></svg><span class="t " style="left:67.5px;top:409.0px;font-size:11.6px;line-height:15px;color:#000;letter-spacing:-0.835px;">Nachweis EWärmeG BW</span><div class="a " style="left:37.0px;top:434.0px;width:9.0px;height:1.0px;background-image:linear-gradient(to right,#9a9a9a 50%,transparent 50%);background-size:2px 1px"></div><svg class="a" style="left:47.0px;top:427.0px;" width="16" height="16" viewBox="0 0 16 16"><circle cx="4" cy="3" r="1.800" fill="#000"/><path d="M2 5.500h4l1 5h-1.500v5h-3v-5h-1.500z" fill="#000"/><circle cx="10.500" cy="4" r="2.800" fill="#fff" stroke="#555" stroke-width="1"/><path d="M10.500 2.500v1.500h1.200" stroke="#555" stroke-width=".8" fill="none"/><rect x="6.300" y="6.700" width="8.600" height="9" fill="#c9211e"/><path d="M7.800 14.200c1.500-1 2.500-3 2.800-5.300c.2 2 1.500 3.800 3.200 4.300c-2-.200-4.200.200-6 1z" fill="none" stroke="#fff" stroke-width=".9"/></svg><span class="t " style="left:67.5px;top:427.0px;font-size:11.6px;line-height:15px;color:#000;letter-spacing:-0.407px;">Nutzungsprofile</span><div class="a " style="left:37.0px;top:452.0px;width:9.0px;height:1.0px;background-image:linear-gradient(to right,#9a9a9a 50%,transparent 50%);background-size:2px 1px"></div><svg class="a" style="left:47.0px;top:445.0px;" width="16" height="16" viewBox="0 0 16 16"><rect x="0.500" y="0.500" width="15" height="15" fill="#ffd92e"/><circle cx="6" cy="6" r="3.200" fill="#fff8d0" stroke="#fff" stroke-width="1" stroke-dasharray="1.200 1.200"/><rect x="6.300" y="6.700" width="8.600" height="9" fill="#c9211e"/><path d="M7.800 14.200c1.500-1 2.500-3 2.800-5.300c.2 2 1.500 3.800 3.200 4.300c-2-.200-4.200.200-6 1z" fill="none" stroke="#fff" stroke-width=".9"/></svg><span class="t " style="left:67.5px;top:445.0px;font-size:11.6px;line-height:15px;color:#000;letter-spacing:-0.464px;">Sommerlicher Wärmeschutz (DIN 4108-2, 8.3, Sonneneintragskennwert)</span><div class="a " style="left:37.0px;top:470.0px;width:9.0px;height:1.0px;background-image:linear-gradient(to right,#9a9a9a 50%,transparent 50%);background-size:2px 1px"></div><svg class="a" style="left:47.0px;top:463.0px;" width="16" height="16" viewBox="0 0 16 16"><circle cx="5.500" cy="3.500" r="1.800" fill="#f08a30"/><path d="M5.500 0v1M5.500 6v1M2 3.500h1M8 3.500h1" stroke="#f08a30" stroke-width=".8"/><rect x="2" y="12" width="2.500" height="3" fill="#f08a30"/><rect x="5.500" y="10" width="2.500" height="5" fill="#f08a30"/><rect x="9" y="12.500" width="2.500" height="2.500" fill="#f08a30"/></svg><span class="t " style="left:67.5px;top:463.0px;font-size:11.6px;line-height:15px;color:#000;letter-spacing:-0.458px;">Sommerlicher Wärmeschutz Simulation (DIN 4108-2, 8.4)</span><div class="a " style="left:18.0px;top:488.0px;width:9.0px;height:1.0px;background-image:linear-gradient(to right,#9a9a9a 50%,transparent 50%);background-size:2px 1px"></div><svg class="a" style="left:13.5px;top:484.0px;" width="9" height="9" viewBox="0 0 9 9"><rect x="0.500" y="0.500" width="8" height="8" rx="1" fill="#f4f4f4" stroke="#9a9a9a" stroke-width="1"/><path d="M2.500 4.500h4" stroke="#2a3f8a" stroke-width="1"/></svg><svg class="a" style="left:27.0px;top:481.0px;" width="16" height="16" viewBox="0 0 16 16"><g transform="translate(0,1)"><path d="M1 0.500h14" stroke="#8a8a8a" stroke-width="1"/><path d="M0 4.500h2M0 8.500h2" stroke="#8a8a8a" stroke-width="1"/><path d="M3 4.500h12M3 8.500h12" stroke="#d8d8d8" stroke-width="1"/><rect x="3.300" y="4.300" width="2.600" height="8" fill="#c9211e"/><rect x="6.900" y="7.400" width="3.100" height="5" fill="#ffd92e"/><rect x="11.400" y="2.300" width="2.700" height="10" fill="#003c96"/><path d="M3.300 4.600h2.600M6.900 7.700h3.100M11.400 2.600h2.700" stroke="#111" stroke-width=".9"/><path d="M1.900 0v12.500" stroke="#000" stroke-width="1.200"/><path d="M1.300 12.500h13.500" stroke="#000" stroke-width="1.200"/><path d="M3 14.600h11" stroke="#000" stroke-width="1.200" stroke-dasharray="2.700 1.300"/></g></svg><span class="t " style="left:48.5px;top:481.0px;font-size:11.6px;line-height:15px;color:#000;letter-spacing:-0.436px;">Vergleichsgrafiken Sanierungsfahrplan</span><div class="a " style="left:37.0px;top:506.0px;width:9.0px;height:1.0px;background-image:linear-gradient(to right,#9a9a9a 50%,transparent 50%);background-size:2px 1px"></div><svg class="a" style="left:47.0px;top:499.0px;" width="16" height="16" viewBox="0 0 16 16"><g transform="translate(0,1)"><path d="M1 0.500h14" stroke="#8a8a8a" stroke-width="1"/><path d="M0 4.500h2M0 8.500h2" stroke="#8a8a8a" stroke-width="1"/><path d="M3 4.500h12M3 8.500h12" stroke="#d8d8d8" stroke-width="1"/><rect x="3.300" y="4.300" width="2.600" height="8" fill="#c9211e"/><rect x="6.900" y="7.400" width="3.100" height="5" fill="#ffd92e"/><rect x="11.400" y="2.300" width="2.700" height="10" fill="#003c96"/><path d="M3.300 4.600h2.600M6.900 7.700h3.100M11.400 2.600h2.700" stroke="#111" stroke-width=".9"/><path d="M1.900 0v12.500" stroke="#000" stroke-width="1.200"/><path d="M1.300 12.500h13.500" stroke="#000" stroke-width="1.200"/><path d="M3 14.600h11" stroke="#000" stroke-width="1.200" stroke-dasharray="2.700 1.300"/></g></svg><span class="t " style="left:67.5px;top:499.0px;font-size:11.6px;line-height:15px;color:#000;letter-spacing:-0.416px;">Endenergiebedarf/Endenergieeinsparung</span><div class="a " style="left:37.0px;top:524.0px;width:9.0px;height:1.0px;background-image:linear-gradient(to right,#9a9a9a 50%,transparent 50%);background-size:2px 1px"></div><svg class="a" style="left:47.0px;top:517.0px;" width="16" height="16" viewBox="0 0 16 16"><g transform="translate(0,1)"><path d="M1 0.500h14" stroke="#8a8a8a" stroke-width="1"/><path d="M0 4.500h2M0 8.500h2" stroke="#8a8a8a" stroke-width="1"/><path d="M3 4.500h12M3 8.500h12" stroke="#d8d8d8" stroke-width="1"/><rect x="3.300" y="4.300" width="2.600" height="8" fill="#c9211e"/><rect x="6.900" y="7.400" width="3.100" height="5" fill="#ffd92e"/><rect x="11.400" y="2.300" width="2.700" height="10" fill="#003c96"/><path d="M3.300 4.600h2.600M6.900 7.700h3.100M11.400 2.600h2.700" stroke="#111" stroke-width=".9"/><path d="M1.900 0v12.500" stroke="#000" stroke-width="1.200"/><path d="M1.300 12.500h13.500" stroke="#000" stroke-width="1.200"/><path d="M3 14.600h11" stroke="#000" stroke-width="1.200" stroke-dasharray="2.700 1.300"/></g></svg><span class="t " style="left:67.5px;top:517.0px;font-size:11.6px;line-height:15px;color:#000;letter-spacing:-0.380px;">Sowiesokosten/energieeffizienzbedingte Mehrkosten</span><div class="a " style="left:37.0px;top:542.0px;width:9.0px;height:1.0px;background-image:linear-gradient(to right,#9a9a9a 50%,transparent 50%);background-size:2px 1px"></div><svg class="a" style="left:47.0px;top:535.0px;" width="16" height="16" viewBox="0 0 16 16"><g transform="translate(0,1)"><path d="M1 0.500h14" stroke="#8a8a8a" stroke-width="1"/><path d="M0 4.500h2M0 8.500h2" stroke="#8a8a8a" stroke-width="1"/><path d="M3 4.500h12M3 8.500h12" stroke="#d8d8d8" stroke-width="1"/><rect x="3.300" y="4.300" width="2.600" height="8" fill="#c9211e"/><rect x="6.900" y="7.400" width="3.100" height="5" fill="#ffd92e"/><rect x="11.400" y="2.300" width="2.700" height="10" fill="#003c96"/><path d="M3.300 4.600h2.600M6.900 7.700h3.100M11.400 2.600h2.700" stroke="#111" stroke-width=".9"/><path d="M1.900 0v12.500" stroke="#000" stroke-width="1.200"/><path d="M1.300 12.500h13.500" stroke="#000" stroke-width="1.200"/><path d="M3 14.600h11" stroke="#000" stroke-width="1.200" stroke-dasharray="2.700 1.300"/></g></svg><span class="t " style="left:67.5px;top:535.0px;font-size:11.6px;line-height:15px;color:#000;letter-spacing:-0.391px;">Vergleich der Amortisation</span><div class="a " style="left:37.0px;top:560.0px;width:9.0px;height:1.0px;background-image:linear-gradient(to right,#9a9a9a 50%,transparent 50%);background-size:2px 1px"></div><svg class="a" style="left:47.0px;top:553.0px;" width="16" height="16" viewBox="0 0 16 16"><g transform="translate(0,1)"><path d="M1 0.500h14" stroke="#8a8a8a" stroke-width="1"/><path d="M0 4.500h2M0 8.500h2" stroke="#8a8a8a" stroke-width="1"/><path d="M3 4.500h12M3 8.500h12" stroke="#d8d8d8" stroke-width="1"/><rect x="3.300" y="4.300" width="2.600" height="8" fill="#c9211e"/><rect x="6.900" y="7.400" width="3.100" height="5" fill="#ffd92e"/><rect x="11.400" y="2.300" width="2.700" height="10" fill="#003c96"/><path d="M3.300 4.600h2.600M6.900 7.700h3.100M11.400 2.600h2.700" stroke="#111" stroke-width=".9"/><path d="M1.900 0v12.500" stroke="#000" stroke-width="1.200"/><path d="M1.300 12.500h13.500" stroke="#000" stroke-width="1.200"/><path d="M3 14.600h11" stroke="#000" stroke-width="1.200" stroke-dasharray="2.700 1.300"/></g></svg><span class="t " style="left:67.5px;top:553.0px;font-size:11.6px;line-height:15px;color:#000;letter-spacing:-0.611px;">Vergleich der CO2-Emissionen</span><div class="a " style="left:37.0px;top:578.0px;width:9.0px;height:1.0px;background-image:linear-gradient(to right,#9a9a9a 50%,transparent 50%);background-size:2px 1px"></div><svg class="a" style="left:47.0px;top:571.0px;" width="16" height="16" viewBox="0 0 16 16"><g transform="translate(0,1)"><path d="M1 0.500h14" stroke="#8a8a8a" stroke-width="1"/><path d="M0 4.500h2M0 8.500h2" stroke="#8a8a8a" stroke-width="1"/><path d="M3 4.500h12M3 8.500h12" stroke="#d8d8d8" stroke-width="1"/><rect x="3.300" y="4.300" width="2.600" height="8" fill="#c9211e"/><rect x="6.900" y="7.400" width="3.100" height="5" fill="#ffd92e"/><rect x="11.400" y="2.300" width="2.700" height="10" fill="#003c96"/><path d="M3.300 4.600h2.600M6.900 7.700h3.100M11.400 2.600h2.700" stroke="#111" stroke-width=".9"/><path d="M1.900 0v12.500" stroke="#000" stroke-width="1.200"/><path d="M1.300 12.500h13.500" stroke="#000" stroke-width="1.200"/><path d="M3 14.600h11" stroke="#000" stroke-width="1.200" stroke-dasharray="2.700 1.300"/></g></svg><span class="t " style="left:67.5px;top:571.0px;font-size:11.6px;line-height:15px;color:#000;letter-spacing:-0.443px;">Vergleich der Energieanteile</span><div class="a " style="left:37.0px;top:596.0px;width:9.0px;height:1.0px;background-image:linear-gradient(to right,#9a9a9a 50%,transparent 50%);background-size:2px 1px"></div><svg class="a" style="left:47.0px;top:589.0px;" width="16" height="16" viewBox="0 0 16 16"><g transform="translate(0,1)"><path d="M1 0.500h14" stroke="#8a8a8a" stroke-width="1"/><path d="M0 4.500h2M0 8.500h2" stroke="#8a8a8a" stroke-width="1"/><path d="M3 4.500h12M3 8.500h12" stroke="#d8d8d8" stroke-width="1"/><rect x="3.300" y="4.300" width="2.600" height="8" fill="#c9211e"/><rect x="6.900" y="7.400" width="3.100" height="5" fill="#ffd92e"/><rect x="11.400" y="2.300" width="2.700" height="10" fill="#003c96"/><path d="M3.300 4.600h2.600M6.900 7.700h3.100M11.400 2.600h2.700" stroke="#111" stroke-width=".9"/><path d="M1.900 0v12.500" stroke="#000" stroke-width="1.200"/><path d="M1.300 12.500h13.500" stroke="#000" stroke-width="1.200"/><path d="M3 14.600h11" stroke="#000" stroke-width="1.200" stroke-dasharray="2.700 1.300"/></g></svg><span class="t " style="left:67.5px;top:589.0px;font-size:11.6px;line-height:15px;color:#000;letter-spacing:-0.495px;">Vergleich der Energiekennzahlen</span><div class="a " style="left:37.0px;top:614.0px;width:9.0px;height:1.0px;background-image:linear-gradient(to right,#9a9a9a 50%,transparent 50%);background-size:2px 1px"></div><svg class="a" style="left:47.0px;top:607.0px;" width="16" height="16" viewBox="0 0 16 16"><g transform="translate(0,1)"><path d="M1 0.500h14" stroke="#8a8a8a" stroke-width="1"/><path d="M0 4.500h2M0 8.500h2" stroke="#8a8a8a" stroke-width="1"/><path d="M3 4.500h12M3 8.500h12" stroke="#d8d8d8" stroke-width="1"/><rect x="3.300" y="4.300" width="2.600" height="8" fill="#c9211e"/><rect x="6.900" y="7.400" width="3.100" height="5" fill="#ffd92e"/><rect x="11.400" y="2.300" width="2.700" height="10" fill="#003c96"/><path d="M3.300 4.600h2.600M6.900 7.700h3.100M11.400 2.600h2.700" stroke="#111" stroke-width=".9"/><path d="M1.900 0v12.500" stroke="#000" stroke-width="1.200"/><path d="M1.300 12.500h13.500" stroke="#000" stroke-width="1.200"/><path d="M3 14.600h11" stroke="#000" stroke-width="1.200" stroke-dasharray="2.700 1.300"/></g></svg><span class="t " style="left:67.5px;top:607.0px;font-size:11.6px;line-height:15px;color:#000;letter-spacing:-0.401px;">Vergleich der Energieträger</span><div class="a " style="left:37.0px;top:632.0px;width:9.0px;height:1.0px;background-image:linear-gradient(to right,#9a9a9a 50%,transparent 50%);background-size:2px 1px"></div><svg class="a" style="left:47.0px;top:625.0px;" width="16" height="16" viewBox="0 0 16 16"><g transform="translate(0,1)"><path d="M1 0.500h14" stroke="#8a8a8a" stroke-width="1"/><path d="M0 4.500h2M0 8.500h2" stroke="#8a8a8a" stroke-width="1"/><path d="M3 4.500h12M3 8.500h12" stroke="#d8d8d8" stroke-width="1"/><rect x="3.300" y="4.300" width="2.600" height="8" fill="#c9211e"/><rect x="6.900" y="7.400" width="3.100" height="5" fill="#ffd92e"/><rect x="11.400" y="2.300" width="2.700" height="10" fill="#003c96"/><path d="M3.300 4.600h2.600M6.900 7.700h3.100M11.400 2.600h2.700" stroke="#111" stroke-width=".9"/><path d="M1.900 0v12.500" stroke="#000" stroke-width="1.200"/><path d="M1.300 12.500h13.500" stroke="#000" stroke-width="1.200"/><path d="M3 14.600h11" stroke="#000" stroke-width="1.200" stroke-dasharray="2.700 1.300"/></g></svg><span class="t " style="left:67.5px;top:625.0px;font-size:11.6px;line-height:15px;color:#000;letter-spacing:-0.433px;">Vergleich der Hüll-U-Werte</span><div class="a " style="left:37.0px;top:650.0px;width:9.0px;height:1.0px;background-image:linear-gradient(to right,#9a9a9a 50%,transparent 50%);background-size:2px 1px"></div><svg class="a" style="left:47.0px;top:643.0px;" width="16" height="16" viewBox="0 0 16 16"><g transform="translate(0,1)"><path d="M1 0.500h14" stroke="#8a8a8a" stroke-width="1"/><path d="M0 4.500h2M0 8.500h2" stroke="#8a8a8a" stroke-width="1"/><path d="M3 4.500h12M3 8.500h12" stroke="#d8d8d8" stroke-width="1"/><rect x="3.300" y="4.300" width="2.600" height="8" fill="#c9211e"/><rect x="6.900" y="7.400" width="3.100" height="5" fill="#ffd92e"/><rect x="11.400" y="2.300" width="2.700" height="10" fill="#003c96"/><path d="M3.300 4.600h2.600M6.900 7.700h3.100M11.400 2.600h2.700" stroke="#111" stroke-width=".9"/><path d="M1.900 0v12.500" stroke="#000" stroke-width="1.200"/><path d="M1.300 12.500h13.500" stroke="#000" stroke-width="1.200"/><path d="M3 14.600h11" stroke="#000" stroke-width="1.200" stroke-dasharray="2.700 1.300"/></g></svg><span class="t " style="left:67.5px;top:643.0px;font-size:11.6px;line-height:15px;color:#000;letter-spacing:-0.488px;">Vergleich der Primärenergie</span><div class="a " style="left:37.0px;top:668.0px;width:9.0px;height:1.0px;background-image:linear-gradient(to right,#9a9a9a 50%,transparent 50%);background-size:2px 1px"></div><svg class="a" style="left:47.0px;top:661.0px;" width="16" height="16" viewBox="0 0 16 16"><g transform="translate(0,1)"><path d="M1 0.500h14" stroke="#8a8a8a" stroke-width="1"/><path d="M0 4.500h2M0 8.500h2" stroke="#8a8a8a" stroke-width="1"/><path d="M3 4.500h12M3 8.500h12" stroke="#d8d8d8" stroke-width="1"/><rect x="3.300" y="4.300" width="2.600" height="8" fill="#c9211e"/><rect x="6.900" y="7.400" width="3.100" height="5" fill="#ffd92e"/><rect x="11.400" y="2.300" width="2.700" height="10" fill="#003c96"/><path d="M3.300 4.600h2.600M6.900 7.700h3.100M11.400 2.600h2.700" stroke="#111" stroke-width=".9"/><path d="M1.900 0v12.500" stroke="#000" stroke-width="1.200"/><path d="M1.300 12.500h13.500" stroke="#000" stroke-width="1.200"/><path d="M3 14.600h11" stroke="#000" stroke-width="1.200" stroke-dasharray="2.700 1.300"/></g></svg><span class="t " style="left:67.5px;top:661.0px;font-size:11.6px;line-height:15px;color:#000;letter-spacing:-0.476px;">Vergleich der Schadstoff-Emissionen</span><div class="a " style="left:37.0px;top:686.0px;width:9.0px;height:1.0px;background-image:linear-gradient(to right,#9a9a9a 50%,transparent 50%);background-size:2px 1px"></div><svg class="a" style="left:47.0px;top:679.0px;" width="16" height="16" viewBox="0 0 16 16"><g transform="translate(0,1)"><path d="M1 0.500h14" stroke="#8a8a8a" stroke-width="1"/><path d="M0 4.500h2M0 8.500h2" stroke="#8a8a8a" stroke-width="1"/><path d="M3 4.500h12M3 8.500h12" stroke="#d8d8d8" stroke-width="1"/><rect x="3.300" y="4.300" width="2.600" height="8" fill="#c9211e"/><rect x="6.900" y="7.400" width="3.100" height="5" fill="#ffd92e"/><rect x="11.400" y="2.300" width="2.700" height="10" fill="#003c96"/><path d="M3.300 4.600h2.600M6.900 7.700h3.100M11.400 2.600h2.700" stroke="#111" stroke-width=".9"/><path d="M1.900 0v12.500" stroke="#000" stroke-width="1.200"/><path d="M1.300 12.500h13.500" stroke="#000" stroke-width="1.200"/><path d="M3 14.600h11" stroke="#000" stroke-width="1.200" stroke-dasharray="2.700 1.300"/></g></svg><span class="t " style="left:67.5px;top:679.0px;font-size:11.6px;line-height:15px;color:#000;letter-spacing:-0.520px;">Vergleich der Transmissionen</span><div class="a " style="left:37.0px;top:704.0px;width:9.0px;height:1.0px;background-image:linear-gradient(to right,#9a9a9a 50%,transparent 50%);background-size:2px 1px"></div><svg class="a" style="left:47.0px;top:697.0px;" width="16" height="16" viewBox="0 0 16 16"><g transform="translate(0,1)"><path d="M1 0.500h14M0 4.500h15M0 8.500h15" stroke="#b8b8b8" stroke-width="1"/><path d="M2.500 4l2 2.500l2-2l2.500 5l2.500-4.500l2.500-2" fill="none" stroke="#1a3c9c" stroke-width="1.200"/><path d="M2.300 10l2.200-2l2 1l2.500-3.500l2 1l3-3.500" fill="none" stroke="#c9211e" stroke-width="1.100"/><path d="M1.500 0v12.500" stroke="#000" stroke-width="1.200"/><path d="M1 12.500h14" stroke="#000" stroke-width="1.200"/><path d="M4.500 13v1.500M8 13v1.500M11.500 13v1.500M14.500 13v1.500" stroke="#666" stroke-width="1"/></g></svg><span class="t " style="left:67.5px;top:697.0px;font-size:11.6px;line-height:15px;color:#000;letter-spacing:-0.484px;">Vergleich der Wärmekostensimulationen</span><div class="a " style="left:18.0px;top:722.0px;width:9.0px;height:1.0px;background-image:linear-gradient(to right,#9a9a9a 50%,transparent 50%);background-size:2px 1px"></div><svg class="a" style="left:13.5px;top:718.0px;" width="9" height="9" viewBox="0 0 9 9"><rect x="0.500" y="0.500" width="8" height="8" rx="1" fill="#f4f4f4" stroke="#9a9a9a" stroke-width="1"/><path d="M2.500 4.500h4" stroke="#2a3f8a" stroke-width="1"/></svg><svg class="a" style="left:27.0px;top:715.0px;" width="16" height="16" viewBox="0 0 16 16"><g transform="translate(0,1)"><path d="M1 0.500h14" stroke="#8a8a8a" stroke-width="1"/><path d="M0 4.500h2M0 8.500h2" stroke="#8a8a8a" stroke-width="1"/><path d="M3 4.500h12M3 8.500h12" stroke="#d8d8d8" stroke-width="1"/><rect x="3.300" y="4.300" width="2.600" height="8" fill="#c9211e"/><rect x="6.900" y="7.400" width="3.100" height="5" fill="#ffd92e"/><rect x="11.400" y="2.300" width="2.700" height="10" fill="#003c96"/><path d="M3.300 4.600h2.600M6.900 7.700h3.100M11.400 2.600h2.700" stroke="#111" stroke-width=".9"/><path d="M1.900 0v12.500" stroke="#000" stroke-width="1.200"/><path d="M1.300 12.500h13.500" stroke="#000" stroke-width="1.200"/><path d="M3 14.600h11" stroke="#000" stroke-width="1.200" stroke-dasharray="2.700 1.300"/></g></svg><span class="t " style="left:48.5px;top:715.0px;font-size:11.6px;line-height:15px;color:#000;letter-spacing:-0.354px;">Vergleichsgrafiken weitere Varianten</span><div class="a " style="left:37.0px;top:740.0px;width:9.0px;height:1.0px;background-image:linear-gradient(to right,#9a9a9a 50%,transparent 50%);background-size:2px 1px"></div><svg class="a" style="left:47.0px;top:733.0px;" width="16" height="16" viewBox="0 0 16 16"><g transform="translate(0,1)"><path d="M1 0.500h14" stroke="#8a8a8a" stroke-width="1"/><path d="M0 4.500h2M0 8.500h2" stroke="#8a8a8a" stroke-width="1"/><path d="M3 4.500h12M3 8.500h12" stroke="#d8d8d8" stroke-width="1"/><rect x="3.300" y="4.300" width="2.600" height="8" fill="#c9211e"/><rect x="6.900" y="7.400" width="3.100" height="5" fill="#ffd92e"/><rect x="11.400" y="2.300" width="2.700" height="10" fill="#003c96"/><path d="M3.300 4.600h2.600M6.900 7.700h3.100M11.400 2.600h2.700" stroke="#111" stroke-width=".9"/><path d="M1.900 0v12.500" stroke="#000" stroke-width="1.200"/><path d="M1.300 12.500h13.500" stroke="#000" stroke-width="1.200"/><path d="M3 14.600h11" stroke="#000" stroke-width="1.200" stroke-dasharray="2.700 1.300"/></g></svg><div class="a " style="left:64.0px;top:732.5px;width:205.0px;height:17.5px;background:#c0cfdf;border-radius:3px"></div><span class="t " style="left:67.5px;top:733.0px;font-size:11.6px;line-height:15px;color:#000;letter-spacing:-0.416px;">Endenergiebedarf/Endenergieeinsparung</span><div class="a " style="left:37.0px;top:758.0px;width:9.0px;height:1.0px;background-image:linear-gradient(to right,#9a9a9a 50%,transparent 50%);background-size:2px 1px"></div><svg class="a" style="left:47.0px;top:751.0px;" width="16" height="16" viewBox="0 0 16 16"><g transform="translate(0,1)"><path d="M1 0.500h14" stroke="#8a8a8a" stroke-width="1"/><path d="M0 4.500h2M0 8.500h2" stroke="#8a8a8a" stroke-width="1"/><path d="M3 4.500h12M3 8.500h12" stroke="#d8d8d8" stroke-width="1"/><rect x="3.300" y="4.300" width="2.600" height="8" fill="#c9211e"/><rect x="6.900" y="7.400" width="3.100" height="5" fill="#ffd92e"/><rect x="11.400" y="2.300" width="2.700" height="10" fill="#003c96"/><path d="M3.300 4.600h2.600M6.900 7.700h3.100M11.400 2.600h2.700" stroke="#111" stroke-width=".9"/><path d="M1.900 0v12.500" stroke="#000" stroke-width="1.200"/><path d="M1.300 12.500h13.500" stroke="#000" stroke-width="1.200"/><path d="M3 14.600h11" stroke="#000" stroke-width="1.200" stroke-dasharray="2.700 1.300"/></g></svg><span class="t " style="left:67.5px;top:751.0px;font-size:11.6px;line-height:15px;color:#000;letter-spacing:-0.380px;">Sowiesokosten/energieeffizienzbedingte Mehrkosten</span><div class="a " style="left:37.0px;top:776.0px;width:9.0px;height:1.0px;background-image:linear-gradient(to right,#9a9a9a 50%,transparent 50%);background-size:2px 1px"></div><svg class="a" style="left:47.0px;top:769.0px;" width="16" height="16" viewBox="0 0 16 16"><g transform="translate(0,1)"><path d="M1 0.500h14" stroke="#8a8a8a" stroke-width="1"/><path d="M0 4.500h2M0 8.500h2" stroke="#8a8a8a" stroke-width="1"/><path d="M3 4.500h12M3 8.500h12" stroke="#d8d8d8" stroke-width="1"/><rect x="3.300" y="4.300" width="2.600" height="8" fill="#c9211e"/><rect x="6.900" y="7.400" width="3.100" height="5" fill="#ffd92e"/><rect x="11.400" y="2.300" width="2.700" height="10" fill="#003c96"/><path d="M3.300 4.600h2.600M6.900 7.700h3.100M11.400 2.600h2.700" stroke="#111" stroke-width=".9"/><path d="M1.900 0v12.500" stroke="#000" stroke-width="1.200"/><path d="M1.300 12.500h13.500" stroke="#000" stroke-width="1.200"/><path d="M3 14.600h11" stroke="#000" stroke-width="1.200" stroke-dasharray="2.700 1.300"/></g></svg><span class="t " style="left:67.5px;top:769.0px;font-size:11.6px;line-height:15px;color:#000;letter-spacing:-0.391px;">Vergleich der Amortisation</span><div class="a " style="left:37.0px;top:794.0px;width:9.0px;height:1.0px;background-image:linear-gradient(to right,#9a9a9a 50%,transparent 50%);background-size:2px 1px"></div><svg class="a" style="left:47.0px;top:787.0px;" width="16" height="16" viewBox="0 0 16 16"><g transform="translate(0,1)"><path d="M1 0.500h14" stroke="#8a8a8a" stroke-width="1"/><path d="M0 4.500h2M0 8.500h2" stroke="#8a8a8a" stroke-width="1"/><path d="M3 4.500h12M3 8.500h12" stroke="#d8d8d8" stroke-width="1"/><rect x="3.300" y="4.300" width="2.600" height="8" fill="#c9211e"/><rect x="6.900" y="7.400" width="3.100" height="5" fill="#ffd92e"/><rect x="11.400" y="2.300" width="2.700" height="10" fill="#003c96"/><path d="M3.300 4.600h2.600M6.900 7.700h3.100M11.400 2.600h2.700" stroke="#111" stroke-width=".9"/><path d="M1.900 0v12.500" stroke="#000" stroke-width="1.200"/><path d="M1.300 12.500h13.500" stroke="#000" stroke-width="1.200"/><path d="M3 14.600h11" stroke="#000" stroke-width="1.200" stroke-dasharray="2.700 1.300"/></g></svg><span class="t " style="left:67.5px;top:787.0px;font-size:11.6px;line-height:15px;color:#000;letter-spacing:-0.611px;">Vergleich der CO2-Emissionen</span><div class="a " style="left:37.0px;top:812.0px;width:9.0px;height:1.0px;background-image:linear-gradient(to right,#9a9a9a 50%,transparent 50%);background-size:2px 1px"></div><svg class="a" style="left:47.0px;top:805.0px;" width="16" height="16" viewBox="0 0 16 16"><g transform="translate(0,1)"><path d="M1 0.500h14" stroke="#8a8a8a" stroke-width="1"/><path d="M0 4.500h2M0 8.500h2" stroke="#8a8a8a" stroke-width="1"/><path d="M3 4.500h12M3 8.500h12" stroke="#d8d8d8" stroke-width="1"/><rect x="3.300" y="4.300" width="2.600" height="8" fill="#c9211e"/><rect x="6.900" y="7.400" width="3.100" height="5" fill="#ffd92e"/><rect x="11.400" y="2.300" width="2.700" height="10" fill="#003c96"/><path d="M3.300 4.600h2.600M6.900 7.700h3.100M11.400 2.600h2.700" stroke="#111" stroke-width=".9"/><path d="M1.900 0v12.500" stroke="#000" stroke-width="1.200"/><path d="M1.300 12.500h13.500" stroke="#000" stroke-width="1.200"/><path d="M3 14.600h11" stroke="#000" stroke-width="1.200" stroke-dasharray="2.700 1.300"/></g></svg><span class="t " style="left:67.5px;top:805.0px;font-size:11.6px;line-height:15px;color:#000;letter-spacing:-0.443px;">Vergleich der Energieanteile</span><div class="a " style="left:37.0px;top:830.0px;width:9.0px;height:1.0px;background-image:linear-gradient(to right,#9a9a9a 50%,transparent 50%);background-size:2px 1px"></div><svg class="a" style="left:47.0px;top:823.0px;" width="16" height="16" viewBox="0 0 16 16"><g transform="translate(0,1)"><path d="M1 0.500h14" stroke="#8a8a8a" stroke-width="1"/><path d="M0 4.500h2M0 8.500h2" stroke="#8a8a8a" stroke-width="1"/><path d="M3 4.500h12M3 8.500h12" stroke="#d8d8d8" stroke-width="1"/><rect x="3.300" y="4.300" width="2.600" height="8" fill="#c9211e"/><rect x="6.900" y="7.400" width="3.100" height="5" fill="#ffd92e"/><rect x="11.400" y="2.300" width="2.700" height="10" fill="#003c96"/><path d="M3.300 4.600h2.600M6.900 7.700h3.100M11.400 2.600h2.700" stroke="#111" stroke-width=".9"/><path d="M1.900 0v12.500" stroke="#000" stroke-width="1.200"/><path d="M1.300 12.500h13.500" stroke="#000" stroke-width="1.200"/><path d="M3 14.600h11" stroke="#000" stroke-width="1.200" stroke-dasharray="2.700 1.300"/></g></svg><span class="t " style="left:67.5px;top:823.0px;font-size:11.6px;line-height:15px;color:#000;letter-spacing:-0.495px;">Vergleich der Energiekennzahlen</span><div class="a " style="left:37.0px;top:848.0px;width:9.0px;height:1.0px;background-image:linear-gradient(to right,#9a9a9a 50%,transparent 50%);background-size:2px 1px"></div><svg class="a" style="left:47.0px;top:841.0px;" width="16" height="16" viewBox="0 0 16 16"><g transform="translate(0,1)"><path d="M1 0.500h14" stroke="#8a8a8a" stroke-width="1"/><path d="M0 4.500h2M0 8.500h2" stroke="#8a8a8a" stroke-width="1"/><path d="M3 4.500h12M3 8.500h12" stroke="#d8d8d8" stroke-width="1"/><rect x="3.300" y="4.300" width="2.600" height="8" fill="#c9211e"/><rect x="6.900" y="7.400" width="3.100" height="5" fill="#ffd92e"/><rect x="11.400" y="2.300" width="2.700" height="10" fill="#003c96"/><path d="M3.300 4.600h2.600M6.900 7.700h3.100M11.400 2.600h2.700" stroke="#111" stroke-width=".9"/><path d="M1.900 0v12.500" stroke="#000" stroke-width="1.200"/><path d="M1.300 12.500h13.500" stroke="#000" stroke-width="1.200"/><path d="M3 14.600h11" stroke="#000" stroke-width="1.200" stroke-dasharray="2.700 1.300"/></g></svg><span class="t " style="left:67.5px;top:841.0px;font-size:11.6px;line-height:15px;color:#000;letter-spacing:-0.401px;">Vergleich der Energieträger</span><div class="a " style="left:37.0px;top:866.0px;width:9.0px;height:1.0px;background-image:linear-gradient(to right,#9a9a9a 50%,transparent 50%);background-size:2px 1px"></div><svg class="a" style="left:47.0px;top:859.0px;" width="16" height="16" viewBox="0 0 16 16"><g transform="translate(0,1)"><path d="M1 0.500h14" stroke="#8a8a8a" stroke-width="1"/><path d="M0 4.500h2M0 8.500h2" stroke="#8a8a8a" stroke-width="1"/><path d="M3 4.500h12M3 8.500h12" stroke="#d8d8d8" stroke-width="1"/><rect x="3.300" y="4.300" width="2.600" height="8" fill="#c9211e"/><rect x="6.900" y="7.400" width="3.100" height="5" fill="#ffd92e"/><rect x="11.400" y="2.300" width="2.700" height="10" fill="#003c96"/><path d="M3.300 4.600h2.600M6.900 7.700h3.100M11.400 2.600h2.700" stroke="#111" stroke-width=".9"/><path d="M1.900 0v12.500" stroke="#000" stroke-width="1.200"/><path d="M1.300 12.500h13.500" stroke="#000" stroke-width="1.200"/><path d="M3 14.600h11" stroke="#000" stroke-width="1.200" stroke-dasharray="2.700 1.300"/></g></svg><span class="t " style="left:67.5px;top:859.0px;font-size:11.6px;line-height:15px;color:#000;letter-spacing:-0.433px;">Vergleich der Hüll-U-Werte</span><div class="a " style="left:37.0px;top:884.0px;width:9.0px;height:1.0px;background-image:linear-gradient(to right,#9a9a9a 50%,transparent 50%);background-size:2px 1px"></div><svg class="a" style="left:47.0px;top:877.0px;" width="16" height="16" viewBox="0 0 16 16"><g transform="translate(0,1)"><path d="M1 0.500h14" stroke="#8a8a8a" stroke-width="1"/><path d="M0 4.500h2M0 8.500h2" stroke="#8a8a8a" stroke-width="1"/><path d="M3 4.500h12M3 8.500h12" stroke="#d8d8d8" stroke-width="1"/><rect x="3.300" y="4.300" width="2.600" height="8" fill="#c9211e"/><rect x="6.900" y="7.400" width="3.100" height="5" fill="#ffd92e"/><rect x="11.400" y="2.300" width="2.700" height="10" fill="#003c96"/><path d="M3.300 4.600h2.600M6.900 7.700h3.100M11.400 2.600h2.700" stroke="#111" stroke-width=".9"/><path d="M1.900 0v12.500" stroke="#000" stroke-width="1.200"/><path d="M1.300 12.500h13.500" stroke="#000" stroke-width="1.200"/><path d="M3 14.600h11" stroke="#000" stroke-width="1.200" stroke-dasharray="2.700 1.300"/></g></svg><span class="t " style="left:67.5px;top:877.0px;font-size:11.6px;line-height:15px;color:#000;letter-spacing:-0.488px;">Vergleich der Primärenergie</span><div class="a " style="left:37.0px;top:902.0px;width:9.0px;height:1.0px;background-image:linear-gradient(to right,#9a9a9a 50%,transparent 50%);background-size:2px 1px"></div><svg class="a" style="left:47.0px;top:895.0px;" width="16" height="16" viewBox="0 0 16 16"><g transform="translate(0,1)"><path d="M1 0.500h14" stroke="#8a8a8a" stroke-width="1"/><path d="M0 4.500h2M0 8.500h2" stroke="#8a8a8a" stroke-width="1"/><path d="M3 4.500h12M3 8.500h12" stroke="#d8d8d8" stroke-width="1"/><rect x="3.300" y="4.300" width="2.600" height="8" fill="#c9211e"/><rect x="6.900" y="7.400" width="3.100" height="5" fill="#ffd92e"/><rect x="11.400" y="2.300" width="2.700" height="10" fill="#003c96"/><path d="M3.300 4.600h2.600M6.900 7.700h3.100M11.400 2.600h2.700" stroke="#111" stroke-width=".9"/><path d="M1.900 0v12.500" stroke="#000" stroke-width="1.200"/><path d="M1.300 12.500h13.500" stroke="#000" stroke-width="1.200"/><path d="M3 14.600h11" stroke="#000" stroke-width="1.200" stroke-dasharray="2.700 1.300"/></g></svg><span class="t " style="left:67.5px;top:895.0px;font-size:11.6px;line-height:15px;color:#000;letter-spacing:-0.476px;">Vergleich der Schadstoff-Emissionen</span><div class="a " style="left:37.0px;top:920.0px;width:9.0px;height:1.0px;background-image:linear-gradient(to right,#9a9a9a 50%,transparent 50%);background-size:2px 1px"></div><svg class="a" style="left:47.0px;top:913.0px;" width="16" height="16" viewBox="0 0 16 16"><g transform="translate(0,1)"><path d="M1 0.500h14" stroke="#8a8a8a" stroke-width="1"/><path d="M0 4.500h2M0 8.500h2" stroke="#8a8a8a" stroke-width="1"/><path d="M3 4.500h12M3 8.500h12" stroke="#d8d8d8" stroke-width="1"/><rect x="3.300" y="4.300" width="2.600" height="8" fill="#c9211e"/><rect x="6.900" y="7.400" width="3.100" height="5" fill="#ffd92e"/><rect x="11.400" y="2.300" width="2.700" height="10" fill="#003c96"/><path d="M3.300 4.600h2.600M6.900 7.700h3.100M11.400 2.600h2.700" stroke="#111" stroke-width=".9"/><path d="M1.900 0v12.500" stroke="#000" stroke-width="1.200"/><path d="M1.300 12.500h13.500" stroke="#000" stroke-width="1.200"/><path d="M3 14.600h11" stroke="#000" stroke-width="1.200" stroke-dasharray="2.700 1.300"/></g></svg><span class="t " style="left:67.5px;top:913.0px;font-size:11.6px;line-height:15px;color:#000;letter-spacing:-0.520px;">Vergleich der Transmissionen</span><div class="a " style="left:37.0px;top:938.0px;width:9.0px;height:1.0px;background-image:linear-gradient(to right,#9a9a9a 50%,transparent 50%);background-size:2px 1px"></div><svg class="a" style="left:47.0px;top:931.0px;" width="16" height="16" viewBox="0 0 16 16"><g transform="translate(0,1)"><path d="M1 0.500h14M0 4.500h15M0 8.500h15" stroke="#b8b8b8" stroke-width="1"/><path d="M2.500 4l2 2.500l2-2l2.500 5l2.500-4.500l2.500-2" fill="none" stroke="#1a3c9c" stroke-width="1.200"/><path d="M2.300 10l2.200-2l2 1l2.500-3.500l2 1l3-3.500" fill="none" stroke="#c9211e" stroke-width="1.100"/><path d="M1.500 0v12.500" stroke="#000" stroke-width="1.200"/><path d="M1 12.500h14" stroke="#000" stroke-width="1.200"/><path d="M4.500 13v1.500M8 13v1.500M11.500 13v1.500M14.500 13v1.500" stroke="#666" stroke-width="1"/></g></svg><span class="t " style="left:67.5px;top:931.0px;font-size:11.6px;line-height:15px;color:#000;letter-spacing:-0.484px;">Vergleich der Wärmekostensimulationen</span></div>
<div class="a " style="left:329.0px;top:183.0px;width:21.0px;height:969.0px;background:#f0f0f0"></div>
<div class="a " style="left:4.0px;top:1131.0px;width:346.0px;height:21.0px;background:#f0f0f0"></div>
<div class="a " style="left:4.0px;top:1151.5px;width:346.0px;height:1.2px;background:#7a7a7a"></div>
<div class="a " style="left:337.3px;top:466.0px;width:2.6px;height:643.0px;background:#868686;border-radius:1.300px"></div>
<div class="a " style="left:25.0px;top:1139.5px;width:188.0px;height:2.4px;background:#868686;border-radius:1.200px"></div>
<div class="a " style="left:0.0px;top:1154.0px;width:373.0px;height:5.0px;background:#a0a0a5"></div>
<!-- mid -->
<div class="a " style="left:385.0px;top:83.0px;width:241.0px;height:32.0px;border:1px solid #dcdcdc;background:#f2f2f2"></div>
<svg class="a" style="left:393.0px;top:96.9px;" width="15" height="15" viewBox="0 0 15 15"><circle cx="7.500" cy="7.500" r="7.400" fill="#0a5fbd"/><circle cx="7.500" cy="7.500" r="2.700" fill="#fff"/></svg>
<span class="t " style="left:411.7px;top:95.5px;font-size:11.6px;line-height:15px;color:#000;letter-spacing:-0.346px;">Monatswerte</span>
<svg class="a" style="left:508.0px;top:96.9px;" width="15" height="15" viewBox="0 0 15 15"><circle cx="7.500" cy="7.500" r="7" fill="#f8f8f8" stroke="#5a5a5a" stroke-width="1"/></svg>
<span class="t " style="left:526.7px;top:95.5px;font-size:11.6px;line-height:15px;color:#000;letter-spacing:-0.366px;">Zonenwerte</span>
<div class="a " style="left:385.0px;top:123.0px;width:241.0px;height:21.0px;background:#fff;border:1px solid #d6d6d6;border-bottom-color:#8c8c8c;border-radius:2px"></div>
<span class="t " style="left:388.7px;top:126.3px;font-size:11.6px;line-height:15px;color:#000;letter-spacing:-0.507px;">alle Zonen</span>
<svg class="a" style="left:610.5px;top:131.5px;" width="9" height="6" viewBox="0 0 9 6"><path d="M0.500 0.700l4 4.3l4 -4.3" fill="none" stroke="#444" stroke-width="1"/></svg>
<span class="t " style="left:385.0px;top:146.3px;font-size:11.6px;line-height:15px;color:#000;letter-spacing:-0.427px;">1 =  Gebäude</span>
<span class="t " style="left:475.0px;top:146.3px;font-size:11.6px;line-height:15px;color:#000;letter-spacing:-0.228px;">3 =  Referenz</span>
<span class="t " style="left:385.0px;top:159.5px;font-size:11.6px;line-height:15px;color:#000;letter-spacing:-0.329px;">2 =  Zonen</span>
<span class="t " style="left:475.0px;top:159.5px;font-size:11.6px;line-height:15px;color:#000;letter-spacing:-0.320px;">4 =  Gebäudevariante</span>
<div class="a " style="left:585.5px;top:155.5px;width:40.5px;height:20.5px;background:#fff;border:1px solid #d6d6d6;border-bottom-color:#8c8c8c;border-radius:2px"></div>
<span class="t " style="left:590.0px;top:158.0px;font-size:11.6px;line-height:15px;color:#000;">1</span>
<svg class="a" style="left:610.5px;top:163.5px;" width="9" height="6" viewBox="0 0 9 6"><path d="M0.500 0.700l4 4.3l4 -4.3" fill="none" stroke="#444" stroke-width="1"/></svg>
<div class="a " style="left:377.5px;top:189.5px;width:274.5px;height:102.0px;border:1px solid #dcdcdc;border-bottom:none"></div>
<div class="a " style="left:383.0px;top:183.0px;width:108.0px;height:14.0px;background:#f0f0f0"></div>
<span class="t " style="left:384.5px;top:181.5px;font-size:11.6px;line-height:15px;color:#000;letter-spacing:-0.285px;">Inhalt der Darstellung</span>
<div class="cb" style="left:383.3px;top:204.0px;width:14.5px;height:14.5px"></div>
<span class="t " style="left:401.6px;top:202.5px;font-size:11.6px;line-height:15px;color:#000;letter-spacing:-0.525px;">Quellen, Senken</span>
<div class="cb" style="left:383.3px;top:220.0px;width:14.5px;height:14.5px"></div>
<span class="t " style="left:401.6px;top:218.5px;font-size:11.6px;line-height:15px;color:#000;letter-spacing:-0.523px;">Energieabgabe</span>
<div class="cb on" style="left:383.3px;top:236.0px;width:14.5px;height:14.5px"><svg width="12" height="12" viewBox="0 0 12 12" style="position:absolute;left:0;top:0"><path d="M2.800 6.200l2.300 2.300l4.300-4.500" fill="none" stroke="#fff" stroke-width="1.100"/></svg></div>
<span class="t " style="left:401.6px;top:234.5px;font-size:11.6px;line-height:15px;color:#000;letter-spacing:-0.423px;">Nutzenergie</span>
<div class="cb" style="left:383.3px;top:252.0px;width:14.5px;height:14.5px"></div>
<span class="t " style="left:401.6px;top:250.5px;font-size:11.6px;line-height:15px;color:#000;letter-spacing:-0.544px;">Endenergie</span>
<div class="cb" style="left:383.3px;top:268.0px;width:14.5px;height:14.5px"></div>
<span class="t " style="left:401.6px;top:266.5px;font-size:11.6px;line-height:15px;color:#000;letter-spacing:-0.535px;">Primärenergie</span>
<div class="cb" style="left:497.4px;top:204.0px;width:14.5px;height:14.5px"></div>
<span class="t " style="left:515.7px;top:202.5px;font-size:11.6px;line-height:15px;color:#000;letter-spacing:-0.481px;">Transmissionswärmeverlust</span>
<div class="cb" style="left:497.4px;top:220.0px;width:14.5px;height:14.5px"></div>
<span class="t " style="left:515.7px;top:218.5px;font-size:11.6px;line-height:15px;color:#000;letter-spacing:-0.403px;">Luftvolumenströme</span>
<div class="cb" style="left:497.4px;top:236.0px;width:14.5px;height:14.5px"></div>
<span class="t " style="left:515.7px;top:234.5px;font-size:11.6px;line-height:15px;color:#000;letter-spacing:-0.407px;">Zeiten</span>
<div class="cb" style="left:497.4px;top:252.0px;width:14.5px;height:14.5px"></div>
<span class="t " style="left:515.7px;top:250.5px;font-size:11.6px;line-height:15px;color:#000;letter-spacing:-0.314px;">Temperaturen</span>
<div class="a " style="left:379.5px;top:292.5px;width:272.3px;height:607.8px;border:1px solid #dcdcdc;border-top:none;border-left:none"></div>
<div class="a " style="left:379.5px;top:292.5px;width:270.5px;height:606.3px;border-top:1.500px solid #6a6a6a;border-left:1.500px solid #6a6a6a;border-bottom:1.300px solid #fff;border-right:1.300px solid #fff"></div>
<div class="a " style="left:382.0px;top:300.5px;width:266.0px;height:241.5px;border:1px solid #dcdcdc"></div>
<div class="a " style="left:386.5px;top:294.5px;width:63.0px;height:13.0px;background:#f0f0f0"></div>
<span class="t " style="left:388.5px;top:292.5px;font-size:11.6px;line-height:15px;color:#000;letter-spacing:-0.414px;">Nutzenergie</span>
<span class="t " style="left:571.0px;top:302.8px;font-size:11.6px;line-height:15px;color:#000;">1</span>
<span class="t " style="left:600.8px;top:302.8px;font-size:11.6px;line-height:15px;color:#000;">2</span>
<span class="t " style="left:631.0px;top:302.8px;font-size:11.6px;line-height:15px;color:#000;">3</span>
<span class="t " style="left:415.5px;top:317.4px;font-size:11.6px;line-height:15px;color:#000;letter-spacing:-0.388px;">bilanzierter Heizwärmebedarf</span>
<div class="cb on" style="left:569.2px;top:318.8px;width:15.5px;height:15.5px"><svg width="12" height="12" viewBox="0 0 12 12" style="position:absolute;left:0;top:0"><path d="M2.800 6.200l2.300 2.300l4.300-4.500" fill="none" stroke="#fff" stroke-width="1.100"/></svg></div>
<div class="cb on" style="left:599.2px;top:318.8px;width:15.5px;height:15.5px"><svg width="12" height="12" viewBox="0 0 12 12" style="position:absolute;left:0;top:0"><path d="M2.800 6.200l2.300 2.300l4.300-4.500" fill="none" stroke="#fff" stroke-width="1.100"/></svg></div>
<div class="cb" style="left:629.3px;top:318.8px;width:15.5px;height:15.5px"></div>
<span class="t " style="left:447.5px;top:337.4px;font-size:11.6px;line-height:15px;color:#000;letter-spacing:-0.351px;">bilanzierter Kühlbedarf</span>
<div class="cb" style="left:569.2px;top:338.8px;width:15.5px;height:15.5px"></div>
<div class="cb" style="left:599.2px;top:338.8px;width:15.5px;height:15.5px"></div>
<div class="cb" style="left:629.3px;top:338.8px;width:15.5px;height:15.5px"></div>
<span class="t " style="left:415.5px;top:357.5px;font-size:11.6px;line-height:15px;color:#000;letter-spacing:-0.433px;">bilanziertes Trinkwarmwasser</span>
<div class="cb" style="left:569.2px;top:358.9px;width:15.5px;height:15.5px"></div>
<div class="cb" style="left:599.2px;top:358.9px;width:15.5px;height:15.5px"></div>
<div class="cb" style="left:629.3px;top:358.9px;width:15.5px;height:15.5px"></div>
<span class="t " style="left:436.5px;top:377.5px;font-size:11.6px;line-height:15px;color:#000;letter-spacing:-0.245px;">Luftaufbereitung für RLT</span>
<div class="cb" style="left:569.2px;top:378.9px;width:15.5px;height:15.5px"></div>
<div class="cb" style="left:599.2px;top:378.9px;width:15.5px;height:15.5px"></div>
<div class="cb" style="left:629.3px;top:378.9px;width:15.5px;height:15.5px"></div>
<span class="t " style="left:436.5px;top:397.6px;font-size:11.6px;line-height:15px;color:#000;letter-spacing:-0.459px;">Kühl Nutzenergie für RLT</span>
<div class="cb" style="left:569.2px;top:399.0px;width:15.5px;height:15.5px"></div>
<div class="cb" style="left:599.2px;top:399.0px;width:15.5px;height:15.5px"></div>
<div class="cb" style="left:629.3px;top:399.0px;width:15.5px;height:15.5px"></div>
<span class="t " style="left:436.5px;top:417.6px;font-size:11.6px;line-height:15px;color:#000;letter-spacing:-0.459px;">Heiz Nutzenergie für RLT</span>
<div class="cb" style="left:569.2px;top:419.0px;width:15.5px;height:15.5px"></div>
<div class="cb" style="left:599.2px;top:419.0px;width:15.5px;height:15.5px"></div>
<div class="cb" style="left:629.3px;top:419.0px;width:15.5px;height:15.5px"></div>
<span class="t " style="left:425.3px;top:437.6px;font-size:11.6px;line-height:15px;color:#000;letter-spacing:-0.431px;">Dampf Nutzenergie für RLT</span>
<div class="cb" style="left:569.2px;top:439.0px;width:15.5px;height:15.5px"></div>
<div class="cb" style="left:599.2px;top:439.0px;width:15.5px;height:15.5px"></div>
<div class="cb" style="left:629.3px;top:439.0px;width:15.5px;height:15.5px"></div>
<span class="t " style="left:443.5px;top:457.7px;font-size:11.6px;line-height:15px;color:#000;letter-spacing:-0.500px;">Heizwärme Nutzungzeit</span>
<div class="cb" style="left:569.2px;top:459.1px;width:15.5px;height:15.5px"></div>
<div class="cb" style="left:599.2px;top:459.1px;width:15.5px;height:15.5px"></div>
<div class="cb" style="left:629.3px;top:459.1px;width:15.5px;height:15.5px"></div>
<span class="t " style="left:450.5px;top:477.7px;font-size:11.6px;line-height:15px;color:#000;letter-spacing:-0.580px;">Heizwärme WE/Ferien</span>
<div class="cb" style="left:569.2px;top:479.1px;width:15.5px;height:15.5px"></div>
<div class="cb" style="left:599.2px;top:479.1px;width:15.5px;height:15.5px"></div>
<div class="cb" style="left:629.3px;top:479.1px;width:15.5px;height:15.5px"></div>
<span class="t " style="left:471.5px;top:497.8px;font-size:11.6px;line-height:15px;color:#000;letter-spacing:-0.407px;">Kälte Nutzungzeit</span>
<div class="cb" style="left:569.2px;top:499.2px;width:15.5px;height:15.5px"></div>
<div class="cb" style="left:599.2px;top:499.2px;width:15.5px;height:15.5px"></div>
<div class="cb" style="left:629.3px;top:499.2px;width:15.5px;height:15.5px"></div>
<span class="t " style="left:478.5px;top:517.8px;font-size:11.6px;line-height:15px;color:#000;letter-spacing:-0.497px;">Kälte WE/Ferien</span>
<div class="cb" style="left:569.2px;top:519.2px;width:15.5px;height:15.5px"></div>
<div class="cb" style="left:599.2px;top:519.2px;width:15.5px;height:15.5px"></div>
<div class="cb" style="left:629.3px;top:519.2px;width:15.5px;height:15.5px"></div>
<div class="a " style="left:377.5px;top:907.9px;width:274.5px;height:107.8px;border:1px solid #dcdcdc"></div>
<div class="a " style="left:383.0px;top:902.0px;width:96.0px;height:14.0px;background:#f0f0f0"></div>
<span class="t " style="left:384.5px;top:900.5px;font-size:11.6px;line-height:15px;color:#000;letter-spacing:-0.437px;">Grafikeinstellungen</span>
<span class="t " style="left:382.3px;top:918.7px;font-size:11.6px;line-height:15px;color:#000;letter-spacing:-0.408px;">Farbeinstellung</span>
<span class="t " style="left:391.4px;top:932.8px;font-size:11.6px;line-height:15px;color:#000;letter-spacing:-0.365px;">1. Datenreihe</span>
<div class="a " style="left:463.0px;top:934.8px;width:35.0px;height:10.5px;background:#e68a2e;border:1px solid #e4e4e4;border-bottom-color:#c8c8c8"></div>
<span class="t " style="left:391.4px;top:946.7px;font-size:11.6px;line-height:15px;color:#000;letter-spacing:-0.365px;">2. Datenreihe</span>
<div class="a " style="left:463.0px;top:948.7px;width:35.0px;height:10.5px;background:#003c8f;border:1px solid #e4e4e4;border-bottom-color:#c8c8c8"></div>
<span class="t " style="left:391.4px;top:960.6px;font-size:11.6px;line-height:15px;color:#000;letter-spacing:-0.365px;">3. Datenreihe</span>
<div class="a " style="left:463.0px;top:962.6px;width:35.0px;height:10.5px;background:#ffd92e;border:1px solid #e4e4e4;border-bottom-color:#c8c8c8"></div>
<span class="t " style="left:391.4px;top:974.5px;font-size:11.6px;line-height:15px;color:#000;letter-spacing:-0.365px;">4. Datenreihe</span>
<div class="a " style="left:463.0px;top:976.5px;width:35.0px;height:10.5px;background:#5a9608;border:1px solid #e4e4e4;border-bottom-color:#c8c8c8"></div>
<span class="t " style="left:391.4px;top:988.4px;font-size:11.6px;line-height:15px;color:#000;letter-spacing:-0.365px;">5. Datenreihe</span>
<div class="a " style="left:463.0px;top:990.4px;width:35.0px;height:10.5px;background:#b82222;border:1px solid #e4e4e4;border-bottom-color:#c8c8c8"></div>
<div class="a " style="left:544.5px;top:935.5px;width:20.5px;height:20.0px;background:#fafafa;border:1px solid #e0e0e0;border-radius:3px"></div>
<svg class="a" style="left:544.7px;top:936.0px;" width="20" height="20" viewBox="0 0 20 20"><path d="M2 3h16M2 7h16M2 11h16" stroke="#c0c0c0" stroke-width="1"/><rect x="5" y="6" width="4" height="9" fill="#e00000"/><rect x="9.500" y="10" width="4" height="5" fill="#ffe000"/><rect x="14.500" y="3.500" width="3.500" height="11.500" fill="#0030e0"/><path d="M3.500 1v14.500M2 15.500h17" stroke="#000" stroke-width="1.400"/><path d="M5 18.500h12" stroke="#000" stroke-width="1" stroke-dasharray="3 1.500"/></svg>
<div class="a " style="left:568.5px;top:935.5px;width:20.5px;height:20.0px;background:#fafafa;border:1px solid #e0e0e0;border-radius:3px"></div>
<svg class="a" style="left:568.7px;top:936.0px;" width="20" height="20" viewBox="0 0 20 20"><path d="M2 3h16M2 7h16M2 11h16" stroke="#c0c0c0" stroke-width="1"/><path d="M4 11l2.500-5l2.500 4l2.500-6l2.500 5l3-5" fill="none" stroke="#e00000" stroke-width="1.200"/><path d="M4 6l3 7l3-6l2.500 6l2.500-5l2 2" fill="none" stroke="#0030e0" stroke-width="1.200"/><path d="M3.500 1v14.500M2 15.500h17" stroke="#000" stroke-width="1.400"/><path d="M5 16v2M8 16v2M11 16v2M14 16v2M17 16v2" stroke="#666" stroke-width="1"/></svg>
<div class="a " style="left:592.5px;top:935.5px;width:20.5px;height:20.0px;background:#fafafa;border:1px solid #e0e0e0;border-radius:3px"></div>
<svg class="a" style="left:592.7px;top:936.0px;" width="20" height="20" viewBox="0 0 20 20"><path d="M1 4h3M16 4h3M1 16h3M16 16h3" stroke="#000" stroke-width="1" stroke-dasharray="2 1"/><circle cx="10" cy="10" r="7.300" fill="#e00000" stroke="#000" stroke-width="1"/><path d="M10 10l-5.500-4.800a7.300 7.300 0 0 1 11.500.500z" fill="#00c000" stroke="#000" stroke-width=".8"/><path d="M10 10l6-4.300a7.300 7.300 0 0 1 .500 8z" fill="#0030e0" stroke="#000" stroke-width=".8"/><path d="M10 10l6.500 3.700a7.300 7.300 0 0 1-6.500 3.600z" fill="#ffe000" stroke="#000" stroke-width=".8"/></svg>
<span class="t " style="left:514.3px;top:960.5px;font-size:11.6px;line-height:15px;color:#000;letter-spacing:-0.380px;">Balken gestapelt</span>
<div class="cb" style="left:598.0px;top:961.8px;width:14.5px;height:14.5px"></div>
<span class="t " style="left:543.0px;top:974.5px;font-size:11.6px;line-height:15px;color:#000;letter-spacing:-0.523px;">3D-Ansicht</span>
<div class="cb on" style="left:598.0px;top:975.8px;width:14.5px;height:14.5px"><svg width="12" height="12" viewBox="0 0 12 12" style="position:absolute;left:0;top:0"><path d="M2.800 6.200l2.300 2.300l4.300-4.500" fill="none" stroke="#fff" stroke-width="1.100"/></svg></div>
<span class="t " style="left:532.6px;top:989.5px;font-size:11.6px;line-height:15px;color:#000;letter-spacing:-0.395px;">Werte zeigen</span>
<div class="cb" style="left:598.7px;top:990.5px;width:13.5px;height:13.5px"></div>
<div class="a " style="left:386.2px;top:1026.1px;width:20.0px;height:20.0px;background:#fdfdfd;border:1px solid #d6d6d6;border-radius:3.500px"></div>
<svg class="a" style="left:386.5px;top:1026.5px;" width="20" height="20" viewBox="0 0 20 20"><path d="M2.500 5.500h5l1 1.500h6v2h-12z" fill="#7a7f8c"/><path d="M4 8.500h12.500l-2.500 6.500h-12z" fill="#ffd92e"/><path d="M14.500 10.500l1.500-1" stroke="#4e9a06" stroke-width="1.200"/></svg>
<div class="a " style="left:414.0px;top:1026.1px;width:20.0px;height:20.0px;background:#fdfdfd;border:1px solid #d6d6d6;border-radius:3.500px"></div>
<svg class="a" style="left:414.3px;top:1026.5px;" width="20" height="20" viewBox="0 0 20 20"><rect x="2.700" y="2.500" width="14.300" height="14.400" fill="#000"/><rect x="4.700" y="2.500" width="10.300" height="1.900" fill="#c9211e"/><rect x="4.700" y="4.400" width="10.300" height="4.900" fill="#fff"/><rect x="6.300" y="11.300" width="7.500" height="5.600" fill="#fff"/><rect x="7.800" y="12.700" width="2.600" height="3" fill="#000"/></svg>
<div class="a " style="left:709.9px;top:1026.1px;width:20.0px;height:20.0px;background:#fdfdfd;border:1px solid #d6d6d6;border-radius:3.500px"></div>
<svg class="a" style="left:710.2px;top:1026.5px;" width="20" height="20" viewBox="0 0 20 20"><rect x="2.700" y="2.500" width="14.300" height="14.400" fill="#000"/><rect x="4.700" y="2.500" width="10.300" height="1.900" fill="#c9211e"/><rect x="4.700" y="4.400" width="10.300" height="4.900" fill="#fff"/><rect x="6.300" y="11.300" width="7.500" height="5.600" fill="#fff"/><rect x="7.800" y="12.700" width="2.600" height="3" fill="#000"/></svg>
<div class="a " style="left:733.7px;top:1026.1px;width:20.0px;height:20.0px;background:#fdfdfd;border:1px solid #d6d6d6;border-radius:3.500px"></div>
<svg class="a" style="left:734.0px;top:1026.5px;" width="20" height="20" viewBox="0 0 20 20"><rect x="3.500" y="3.500" width="11" height="13" fill="#fff8b0" stroke="#c8b400" stroke-width="1"/><rect x="6.500" y="2" width="5" height="3" fill="#888"/><path d="M7.500 8h8.500l1.500 1.500v8h-10z" fill="#fff" stroke="#000" stroke-width="1"/><path d="M9 11h6M9 13h6M9 15h4" stroke="#000" stroke-width="1"/></svg>
<div class="a " style="left:757.7px;top:1026.1px;width:20.0px;height:20.0px;background:#fdfdfd;border:1px solid #d6d6d6;border-radius:3.500px"></div>
<svg class="a" style="left:758.0px;top:1026.5px;" width="20" height="20" viewBox="0 0 20 20"><rect x="7" y="2.500" width="6.500" height="7" fill="#fff" stroke="#777" stroke-width="1"/><path d="M9 4.500h2.500M10.200 4.500v3.500" stroke="#000" stroke-width="1.200"/><rect x="3" y="10" width="14" height="5.500" fill="#9a9a9a" stroke="#6a6a6a" stroke-width="1"/><path d="M3 16.500h14" stroke="#6a6a6a" stroke-width="1.500"/></svg>
<div class="a " style="left:377.0px;top:1061.0px;width:25.0px;height:24.8px;background:#a9d22f"></div>
<svg class="a" style="left:377.0px;top:1061.0px;" width="25" height="25" viewBox="0 0 25 25"><path d="M7 7.500l10.500 10.500M17.500 7.500l-10.500 10.500" stroke="#c9211e" stroke-width="2" fill="none"/></svg>
<span class="t " style="left:405.2px;top:1062.2px;font-size:11.6px;line-height:15px;color:#000;letter-spacing:0.133px;font-weight:bold;">Protokoll- Anzeige</span>
<span class="t " style="left:1251.8px;top:1063.5px;font-size:11.6px;line-height:15px;color:#000;letter-spacing:-0.532px;">Durch Klicken der mit einem</span>
<svg class="a" style="left:1386.5px;top:1065.5px;" width="11" height="10" viewBox="0 0 11 10"><path d="M5.500 1l4.700 8.300h-9.400z" fill="none" stroke="#333" stroke-width=".9"/><path d="M5.500 3.800v3M5.500 7.700v.9" stroke="#333" stroke-width=".9"/></svg>
<span class="t " style="left:1400.3px;top:1063.5px;font-size:11.6px;line-height:15px;color:#000;letter-spacing:-0.400px;">markierten Zeile wird die zugehörige Eingabemaske geöffnet.</span>
<div class="a " style="left:377.5px;top:1087.0px;width:1318.5px;height:72.0px;background:#fff"></div>
<!-- chart -->
<div class="a " style="left:676.0px;top:73.0px;width:1020.0px;height:944.0px;background:#fff"></div>
<svg class="a" style="left:0;top:0" width="1958" height="1159" viewBox="0 0 1958 1159"><defs><linearGradient id="ot" x1="0" y1="0" x2="0" y2="1"><stop offset="0" stop-color="#e68c30"/><stop offset="1" stop-color="#a04c0c"/></linearGradient><linearGradient id="bt" x1="0" y1="0" x2="0" y2="1"><stop offset="0" stop-color="#00348c"/><stop offset="1" stop-color="#000048"/></linearGradient><linearGradient id="bs" x1="0" y1="0" x2="1" y2="0"><stop offset="0" stop-color="#00000c"/><stop offset="1" stop-color="#003488"/></linearGradient></defs><rect x="794.2" y="109.9" width="872.2" height="698.0" fill="#fff"/><path d="M794.2 784.1H1666.4M794.2 760.6H1666.4M794.2 737.0H1666.4M794.2 713.5H1666.4M794.2 690.0H1666.4M794.2 666.5H1666.4M794.2 643.0H1666.4M794.2 619.4H1666.4M794.2 595.9H1666.4M794.2 572.4H1666.4M794.2 548.9H1666.4M794.2 525.4H1666.4M794.2 501.8H1666.4M794.2 478.3H1666.4M794.2 454.8H1666.4M794.2 431.3H1666.4M794.2 407.8H1666.4M794.2 384.2H1666.4M794.2 360.7H1666.4M794.2 337.2H1666.4M794.2 313.7H1666.4M794.2 290.2H1666.4M794.2 266.6H1666.4M794.2 243.1H1666.4M794.2 219.6H1666.4M794.2 196.1H1666.4M794.2 172.6H1666.4M794.2 149.0H1666.4M794.2 125.5H1666.4M842.4 109.9V807.9M912.9 109.9V807.9M983.3 109.9V807.9M1053.8 109.9V807.9M1124.3 109.9V807.9M1194.8 109.9V807.9M1265.2 109.9V807.9M1335.7 109.9V807.9M1406.2 109.9V807.9M1476.6 109.9V807.9M1547.1 109.9V807.9M1617.6 109.9V807.9" stroke="#d6d6d6" stroke-width="1.300" fill="none"/><path d="M794.2 109.9H1666.4V807.9" stroke="#4a4a4a" stroke-width="1.300" fill="none"/><path d="M794.2 807.9H1666.4" stroke="#9a9a9a" stroke-width="1" fill="none"/><polygon points="779.3,124.3 794.2,109.9 794.2,807.9 779.3,822.3" fill="#ffff80" stroke="#3a3a20" stroke-width="1"/><path d="M779.3 798.5L794.2 784.1M779.3 775.0L794.2 760.6M779.3 751.4L794.2 737.0M779.3 727.9L794.2 713.5M779.3 704.4L794.2 690.0M779.3 680.9L794.2 666.5M779.3 657.4L794.2 643.0M779.3 633.8L794.2 619.4M779.3 610.3L794.2 595.9M779.3 586.8L794.2 572.4M779.3 563.3L794.2 548.9M779.3 539.8L794.2 525.4M779.3 516.2L794.2 501.8M779.3 492.7L794.2 478.3M779.3 469.2L794.2 454.8M779.3 445.7L794.2 431.3M779.3 422.2L794.2 407.8M779.3 398.6L794.2 384.2M779.3 375.1L794.2 360.7M779.3 351.6L794.2 337.2M779.3 328.1L794.2 313.7M779.3 304.6L794.2 290.2M779.3 281.0L794.2 266.6M779.3 257.5L794.2 243.1M779.3 234.0L794.2 219.6M779.3 210.5L794.2 196.1M779.3 187.0L794.2 172.6M779.3 163.4L794.2 149.0M779.3 139.9L794.2 125.5" stroke="#e8e8a8" stroke-width="1.200" fill="none"/><polygon points="779.3,822.3 794.2,807.9 1666.4,807.9 1651.5,822.3" fill="#fff" stroke="#555" stroke-width="1"/><path d="M779.3 124.3V822.3" stroke="#000" stroke-width="2.200"/><polygon points="852.5,151.2 867.1,136.6 867.1,807.7 852.5,822.3" fill="url(#bs)" stroke="#000" stroke-width=".9"/><polygon points="804.1,151.2 818.7,136.6 842.8,136.6 828.2,151.2" fill="url(#ot)" stroke="#000" stroke-width=".9"/><polygon points="828.2,151.2 842.8,136.6 867.1,136.6 852.5,151.2" fill="url(#bt)" stroke="#000" stroke-width=".9"/><rect x="804.1" y="151.2" width="24.1" height="671.1" fill="#e68c30" stroke="#3a2208" stroke-width=".9"/><rect x="828.2" y="151.2" width="24.3" height="671.1" fill="#003a8c" stroke="#000820" stroke-width=".9"/><polygon points="923.0,246.3 937.6,231.7 937.6,807.7 923.0,822.3" fill="url(#bs)" stroke="#000" stroke-width=".9"/><polygon points="874.6,246.3 889.2,231.7 913.4,231.7 898.8,246.3" fill="url(#ot)" stroke="#000" stroke-width=".9"/><polygon points="898.8,246.3 913.4,231.7 937.6,231.7 923.0,246.3" fill="url(#bt)" stroke="#000" stroke-width=".9"/><rect x="874.6" y="246.3" width="24.1" height="576.0" fill="#e68c30" stroke="#3a2208" stroke-width=".9"/><rect x="898.8" y="246.3" width="24.3" height="576.0" fill="#003a8c" stroke="#000820" stroke-width=".9"/><polygon points="993.6,341.2 1008.2,326.6 1008.2,807.7 993.6,822.3" fill="url(#bs)" stroke="#000" stroke-width=".9"/><polygon points="945.2,341.2 959.8,326.6 983.9,326.6 969.3,341.2" fill="url(#ot)" stroke="#000" stroke-width=".9"/><polygon points="969.3,341.2 983.9,326.6 1008.2,326.6 993.6,341.2" fill="url(#bt)" stroke="#000" stroke-width=".9"/><rect x="945.2" y="341.2" width="24.1" height="481.1" fill="#e68c30" stroke="#3a2208" stroke-width=".9"/><rect x="969.3" y="341.2" width="24.3" height="481.1" fill="#003a8c" stroke="#000820" stroke-width=".9"/><polygon points="1064.1,572.9 1078.7,558.3 1078.7,807.7 1064.1,822.3" fill="url(#bs)" stroke="#000" stroke-width=".9"/><polygon points="1015.7,572.9 1030.3,558.3 1054.4,558.3 1039.8,572.9" fill="url(#ot)" stroke="#000" stroke-width=".9"/><polygon points="1039.8,572.9 1054.4,558.3 1078.7,558.3 1064.1,572.9" fill="url(#bt)" stroke="#000" stroke-width=".9"/><rect x="1015.7" y="572.9" width="24.1" height="249.4" fill="#e68c30" stroke="#3a2208" stroke-width=".9"/><rect x="1039.8" y="572.9" width="24.3" height="249.4" fill="#003a8c" stroke="#000820" stroke-width=".9"/><polygon points="1134.7,732.1 1149.3,717.5 1149.3,807.7 1134.7,822.3" fill="url(#bs)" stroke="#000" stroke-width=".9"/><polygon points="1086.3,732.1 1100.9,717.5 1125.0,717.5 1110.4,732.1" fill="url(#ot)" stroke="#000" stroke-width=".9"/><polygon points="1110.4,732.1 1125.0,717.5 1149.3,717.5 1134.7,732.1" fill="url(#bt)" stroke="#000" stroke-width=".9"/><rect x="1086.3" y="732.1" width="24.1" height="90.2" fill="#e68c30" stroke="#3a2208" stroke-width=".9"/><rect x="1110.4" y="732.1" width="24.3" height="90.2" fill="#003a8c" stroke="#000820" stroke-width=".9"/><polygon points="1205.2,796.3 1219.8,781.7 1219.8,807.7 1205.2,822.3" fill="url(#bs)" stroke="#000" stroke-width=".9"/><polygon points="1156.9,796.3 1171.5,781.7 1195.5,781.7 1181.0,796.3" fill="url(#ot)" stroke="#000" stroke-width=".9"/><polygon points="1181.0,796.3 1195.5,781.7 1219.8,781.7 1205.2,796.3" fill="url(#bt)" stroke="#000" stroke-width=".9"/><rect x="1156.9" y="796.3" width="24.1" height="26.0" fill="#e68c30" stroke="#3a2208" stroke-width=".9"/><rect x="1181.0" y="796.3" width="24.3" height="26.0" fill="#003a8c" stroke="#000820" stroke-width=".9"/><polygon points="1275.8,820.9 1290.4,806.3 1290.4,807.7 1275.8,822.3" fill="url(#bs)" stroke="#000" stroke-width=".9"/><polygon points="1227.4,820.9 1242.0,806.3 1266.1,806.3 1251.5,820.9" fill="url(#ot)" stroke="#000" stroke-width=".9"/><polygon points="1251.5,820.9 1266.1,806.3 1290.4,806.3 1275.8,820.9" fill="url(#bt)" stroke="#000" stroke-width=".9"/><rect x="1227.4" y="820.9" width="24.1" height="1.4" fill="#e68c30" stroke="#3a2208" stroke-width=".9"/><rect x="1251.5" y="820.9" width="24.3" height="1.4" fill="#003a8c" stroke="#000820" stroke-width=".9"/><polygon points="1346.3,818.3 1360.9,803.7 1360.9,807.7 1346.3,822.3" fill="url(#bs)" stroke="#000" stroke-width=".9"/><polygon points="1298.0,818.3 1312.5,803.7 1336.6,803.7 1322.0,818.3" fill="url(#ot)" stroke="#000" stroke-width=".9"/><polygon points="1322.0,818.3 1336.6,803.7 1360.9,803.7 1346.3,818.3" fill="url(#bt)" stroke="#000" stroke-width=".9"/><rect x="1298.0" y="818.3" width="24.1" height="4.0" fill="#e68c30" stroke="#3a2208" stroke-width=".9"/><rect x="1322.0" y="818.3" width="24.3" height="4.0" fill="#003a8c" stroke="#000820" stroke-width=".9"/><polygon points="1416.9,721.2 1431.5,706.6 1431.5,807.7 1416.9,822.3" fill="url(#bs)" stroke="#000" stroke-width=".9"/><polygon points="1368.5,721.2 1383.1,706.6 1407.2,706.6 1392.6,721.2" fill="url(#ot)" stroke="#000" stroke-width=".9"/><polygon points="1392.6,721.2 1407.2,706.6 1431.5,706.6 1416.9,721.2" fill="url(#bt)" stroke="#000" stroke-width=".9"/><rect x="1368.5" y="721.2" width="24.1" height="101.1" fill="#e68c30" stroke="#3a2208" stroke-width=".9"/><rect x="1392.6" y="721.2" width="24.3" height="101.1" fill="#003a8c" stroke="#000820" stroke-width=".9"/><polygon points="1487.5,521.4 1502.0,506.8 1502.0,807.7 1487.5,822.3" fill="url(#bs)" stroke="#000" stroke-width=".9"/><polygon points="1439.1,521.4 1453.7,506.8 1477.8,506.8 1463.2,521.4" fill="url(#ot)" stroke="#000" stroke-width=".9"/><polygon points="1463.2,521.4 1477.8,506.8 1502.0,506.8 1487.5,521.4" fill="url(#bt)" stroke="#000" stroke-width=".9"/><rect x="1439.1" y="521.4" width="24.1" height="300.9" fill="#e68c30" stroke="#3a2208" stroke-width=".9"/><rect x="1463.2" y="521.4" width="24.3" height="300.9" fill="#003a8c" stroke="#000820" stroke-width=".9"/><polygon points="1558.0,277.1 1572.6,262.5 1572.6,807.7 1558.0,822.3" fill="url(#bs)" stroke="#000" stroke-width=".9"/><polygon points="1509.6,277.1 1524.2,262.5 1548.3,262.5 1533.7,277.1" fill="url(#ot)" stroke="#000" stroke-width=".9"/><polygon points="1533.7,277.1 1548.3,262.5 1572.6,262.5 1558.0,277.1" fill="url(#bt)" stroke="#000" stroke-width=".9"/><rect x="1509.6" y="277.1" width="24.1" height="545.2" fill="#e68c30" stroke="#3a2208" stroke-width=".9"/><rect x="1533.7" y="277.1" width="24.3" height="545.2" fill="#003a8c" stroke="#000820" stroke-width=".9"/><polygon points="1628.5,124.7 1643.1,110.1 1643.1,807.7 1628.5,822.3" fill="url(#bs)" stroke="#000" stroke-width=".9"/><polygon points="1580.2,124.7 1594.8,110.1 1618.8,110.1 1604.2,124.7" fill="url(#ot)" stroke="#000" stroke-width=".9"/><polygon points="1604.2,124.7 1618.8,110.1 1643.1,110.1 1628.5,124.7" fill="url(#bt)" stroke="#000" stroke-width=".9"/><rect x="1580.2" y="124.7" width="24.1" height="697.6" fill="#e68c30" stroke="#3a2208" stroke-width=".9"/><rect x="1604.2" y="124.7" width="24.3" height="697.6" fill="#003a8c" stroke="#000820" stroke-width=".9"/><path d="M778.3 822.3H1651.5" stroke="#000" stroke-width="2.200"/><path d="M778.3 822.0h-4.500M778.3 798.5h-4.500M778.3 775.0h-4.500M778.3 751.4h-4.500M778.3 727.9h-4.500M778.3 704.4h-4.500M778.3 680.9h-4.500M778.3 657.4h-4.500M778.3 633.8h-4.500M778.3 610.3h-4.500M778.3 586.8h-4.500M778.3 563.3h-4.500M778.3 539.8h-4.500M778.3 516.2h-4.500M778.3 492.7h-4.500M778.3 469.2h-4.500M778.3 445.7h-4.500M778.3 422.2h-4.500M778.3 398.6h-4.500M778.3 375.1h-4.500M778.3 351.6h-4.500M778.3 328.1h-4.500M778.3 304.6h-4.500M778.3 281.0h-4.500M778.3 257.5h-4.500M778.3 234.0h-4.500M778.3 210.5h-4.500M778.3 187.0h-4.500M778.3 163.4h-4.500M778.3 139.9h-4.500" stroke="#a8a8a8" stroke-width="1" fill="none"/><path d="M778.3 817.3h-2.500M778.3 812.6h-2.500M778.3 807.9h-2.500M778.3 803.2h-2.500M778.3 793.8h-2.500M778.3 789.1h-2.500M778.3 784.4h-2.500M778.3 779.7h-2.500M778.3 770.3h-2.500M778.3 765.6h-2.500M778.3 760.8h-2.500M778.3 756.1h-2.500M778.3 746.7h-2.500M778.3 742.0h-2.500M778.3 737.3h-2.500M778.3 732.6h-2.500M778.3 723.2h-2.500M778.3 718.5h-2.500M778.3 713.8h-2.500M778.3 709.1h-2.500M778.3 699.7h-2.500M778.3 695.0h-2.500M778.3 690.3h-2.500M778.3 685.6h-2.500M778.3 676.2h-2.500M778.3 671.5h-2.500M778.3 666.8h-2.500M778.3 662.1h-2.500M778.3 652.7h-2.500M778.3 648.0h-2.500M778.3 643.2h-2.500M778.3 638.5h-2.500M778.3 629.1h-2.500M778.3 624.4h-2.500M778.3 619.7h-2.500M778.3 615.0h-2.500M778.3 605.6h-2.500M778.3 600.9h-2.500M778.3 596.2h-2.500M778.3 591.5h-2.500M778.3 582.1h-2.500M778.3 577.4h-2.500M778.3 572.7h-2.500M778.3 568.0h-2.500M778.3 558.6h-2.500M778.3 553.9h-2.500M778.3 549.2h-2.500M778.3 544.5h-2.500M778.3 535.1h-2.500M778.3 530.4h-2.500M778.3 525.6h-2.500M778.3 520.9h-2.500M778.3 511.5h-2.500M778.3 506.8h-2.500M778.3 502.1h-2.500M778.3 497.4h-2.500M778.3 488.0h-2.500M778.3 483.3h-2.500M778.3 478.6h-2.500M778.3 473.9h-2.500M778.3 464.5h-2.500M778.3 459.8h-2.500M778.3 455.1h-2.500M778.3 450.4h-2.500M778.3 441.0h-2.500M778.3 436.3h-2.500M778.3 431.6h-2.500M778.3 426.9h-2.500M778.3 417.5h-2.500M778.3 412.8h-2.500M778.3 408.0h-2.500M778.3 403.3h-2.500M778.3 393.9h-2.500M778.3 389.2h-2.500M778.3 384.5h-2.500M778.3 379.8h-2.500M778.3 370.4h-2.500M778.3 365.7h-2.500M778.3 361.0h-2.500M778.3 356.3h-2.500M778.3 346.9h-2.500M778.3 342.2h-2.500M778.3 337.5h-2.500M778.3 332.8h-2.500M778.3 323.4h-2.500M778.3 318.7h-2.500M778.3 314.0h-2.500M778.3 309.3h-2.500M778.3 299.9h-2.500M778.3 295.2h-2.500M778.3 290.4h-2.500M778.3 285.7h-2.500M778.3 276.3h-2.500M778.3 271.6h-2.500M778.3 266.9h-2.500M778.3 262.2h-2.500M778.3 252.8h-2.500M778.3 248.1h-2.500M778.3 243.4h-2.500M778.3 238.7h-2.500M778.3 229.3h-2.500M778.3 224.6h-2.500M778.3 219.9h-2.500M778.3 215.2h-2.500M778.3 205.8h-2.500M778.3 201.1h-2.500M778.3 196.4h-2.500M778.3 191.7h-2.500M778.3 182.3h-2.500M778.3 177.6h-2.500M778.3 172.8h-2.500M778.3 168.1h-2.500M778.3 158.7h-2.500M778.3 154.0h-2.500M778.3 149.3h-2.500M778.3 144.6h-2.500M778.3 135.2h-2.500M778.3 130.5h-2.500M778.3 125.8h-2.500" stroke="#cccccc" stroke-width="1" fill="none"/><path d="M828.2 823.3v5M898.8 823.3v5M969.3 823.3v5M1039.8 823.3v5M1110.4 823.3v5M1181.0 823.3v5M1251.5 823.3v5M1322.0 823.3v5M1392.6 823.3v5M1463.2 823.3v5M1533.7 823.3v5M1604.2 823.3v5" stroke="#a8a8a8" stroke-width="1" fill="none"/><path d="M792.9 823.3v2.500M810.6 823.3v2.500M845.8 823.3v2.500M863.5 823.3v2.500M881.1 823.3v2.500M916.4 823.3v2.500M934.0 823.3v2.500M951.7 823.3v2.500M986.9 823.3v2.500M1004.5 823.3v2.500M1022.2 823.3v2.500M1057.4 823.3v2.500M1075.1 823.3v2.500M1092.8 823.3v2.500M1128.0 823.3v2.500M1145.7 823.3v2.500M1163.4 823.3v2.500M1198.5 823.3v2.500M1216.2 823.3v2.500M1233.9 823.3v2.500M1269.1 823.3v2.500M1286.8 823.3v2.500M1304.5 823.3v2.500M1339.6 823.3v2.500M1357.3 823.3v2.500M1375.0 823.3v2.500M1410.2 823.3v2.500M1427.9 823.3v2.500M1445.6 823.3v2.500M1480.8 823.3v2.500M1498.4 823.3v2.500M1516.1 823.3v2.500M1551.3 823.3v2.500M1569.0 823.3v2.500M1586.7 823.3v2.500M1621.8 823.3v2.500" stroke="#cccccc" stroke-width="1" fill="none"/></svg>
<span class="t " style="right:1188.8px;top:813.1px;font-size:14px;line-height:18px;color:#08081c;">0</span>
<span class="t " style="right:1191.1px;top:789.6px;font-size:14px;line-height:18px;color:#08081c;letter-spacing:-0.818px;">500</span>
<span class="t " style="right:1191.0px;top:766.1px;font-size:14px;line-height:18px;color:#08081c;letter-spacing:-0.736px;">1.000</span>
<span class="t " style="right:1191.0px;top:742.5px;font-size:14px;line-height:18px;color:#08081c;letter-spacing:-0.736px;">1.500</span>
<span class="t " style="right:1191.0px;top:719.0px;font-size:14px;line-height:18px;color:#08081c;letter-spacing:-0.736px;">2.000</span>
<span class="t " style="right:1191.0px;top:695.5px;font-size:14px;line-height:18px;color:#08081c;letter-spacing:-0.736px;">2.500</span>
<span class="t " style="right:1191.0px;top:672.0px;font-size:14px;line-height:18px;color:#08081c;letter-spacing:-0.736px;">3.000</span>
<span class="t " style="right:1191.0px;top:648.5px;font-size:14px;line-height:18px;color:#08081c;letter-spacing:-0.736px;">3.500</span>
<span class="t " style="right:1191.0px;top:624.9px;font-size:14px;line-height:18px;color:#08081c;letter-spacing:-0.736px;">4.000</span>
<span class="t " style="right:1191.0px;top:601.4px;font-size:14px;line-height:18px;color:#08081c;letter-spacing:-0.736px;">4.500</span>
<span class="t " style="right:1191.0px;top:577.9px;font-size:14px;line-height:18px;color:#08081c;letter-spacing:-0.736px;">5.000</span>
<span class="t " style="right:1191.0px;top:554.4px;font-size:14px;line-height:18px;color:#08081c;letter-spacing:-0.736px;">5.500</span>
<span class="t " style="right:1191.0px;top:530.9px;font-size:14px;line-height:18px;color:#08081c;letter-spacing:-0.736px;">6.000</span>
<span class="t " style="right:1191.0px;top:507.3px;font-size:14px;line-height:18px;color:#08081c;letter-spacing:-0.736px;">6.500</span>
<span class="t " style="right:1191.0px;top:483.8px;font-size:14px;line-height:18px;color:#08081c;letter-spacing:-0.736px;">7.000</span>
<span class="t " style="right:1191.0px;top:460.3px;font-size:14px;line-height:18px;color:#08081c;letter-spacing:-0.736px;">7.500</span>
<span class="t " style="right:1191.0px;top:436.8px;font-size:14px;line-height:18px;color:#08081c;letter-spacing:-0.736px;">8.000</span>
<span class="t " style="right:1191.0px;top:413.3px;font-size:14px;line-height:18px;color:#08081c;letter-spacing:-0.736px;">8.500</span>
<span class="t " style="right:1191.0px;top:389.7px;font-size:14px;line-height:18px;color:#08081c;letter-spacing:-0.736px;">9.000</span>
<span class="t " style="right:1191.0px;top:366.2px;font-size:14px;line-height:18px;color:#08081c;letter-spacing:-0.736px;">9.500</span>
<span class="t " style="right:1191.0px;top:342.7px;font-size:14px;line-height:18px;color:#08081c;letter-spacing:-0.749px;">10.000</span>
<span class="t " style="right:1191.0px;top:319.2px;font-size:14px;line-height:18px;color:#08081c;letter-spacing:-0.749px;">10.500</span>
<span class="t " style="right:1191.0px;top:295.7px;font-size:14px;line-height:18px;color:#08081c;letter-spacing:-0.731px;">11.000</span>
<span class="t " style="right:1191.0px;top:272.1px;font-size:14px;line-height:18px;color:#08081c;letter-spacing:-0.731px;">11.500</span>
<span class="t " style="right:1191.0px;top:248.6px;font-size:14px;line-height:18px;color:#08081c;letter-spacing:-0.749px;">12.000</span>
<span class="t " style="right:1191.0px;top:225.1px;font-size:14px;line-height:18px;color:#08081c;letter-spacing:-0.749px;">12.500</span>
<span class="t " style="right:1191.0px;top:201.6px;font-size:14px;line-height:18px;color:#08081c;letter-spacing:-0.749px;">13.000</span>
<span class="t " style="right:1191.0px;top:178.1px;font-size:14px;line-height:18px;color:#08081c;letter-spacing:-0.749px;">13.500</span>
<span class="t " style="right:1191.0px;top:154.5px;font-size:14px;line-height:18px;color:#08081c;letter-spacing:-0.749px;">14.000</span>
<span class="t " style="right:1191.0px;top:131.0px;font-size:14px;line-height:18px;color:#08081c;letter-spacing:-0.749px;">14.500</span>
<span class="t" style="left:712px;top:472px;font-size:11.500px;line-height:14px;transform:translate(-50%,-50%) rotate(-90deg);color:#101020">kWh</span>
<span class="t" style="left:828.2px;top:842.4px;font-size:14px;line-height:16px;letter-spacing:-0.606px;transform-origin:0 0;transform:rotate(-90deg) translate(-100%,-50%);color:#08081c">Januar</span>
<span class="t" style="left:898.8px;top:842.8px;font-size:14px;line-height:16px;letter-spacing:-0.595px;transform-origin:0 0;transform:rotate(-90deg) translate(-100%,-50%);color:#08081c">Februar</span>
<span class="t" style="left:969.3px;top:841.6px;font-size:14px;line-height:16px;letter-spacing:-0.661px;transform-origin:0 0;transform:rotate(-90deg) translate(-100%,-50%);color:#08081c">März</span>
<span class="t" style="left:1039.8px;top:841.6px;font-size:14px;line-height:16px;letter-spacing:-0.476px;transform-origin:0 0;transform:rotate(-90deg) translate(-100%,-50%);color:#08081c">April</span>
<span class="t" style="left:1110.4px;top:841.4px;font-size:14px;line-height:16px;letter-spacing:-0.639px;transform-origin:0 0;transform:rotate(-90deg) translate(-100%,-50%);color:#08081c">Mai</span>
<span class="t" style="left:1181.0px;top:841.5px;font-size:14px;line-height:16px;letter-spacing:-0.546px;transform-origin:0 0;transform:rotate(-90deg) translate(-100%,-50%);color:#08081c">Juni</span>
<span class="t" style="left:1251.5px;top:841.6px;font-size:14px;line-height:16px;letter-spacing:-0.446px;transform-origin:0 0;transform:rotate(-90deg) translate(-100%,-50%);color:#08081c">Juli</span>
<span class="t" style="left:1322.0px;top:842.4px;font-size:14px;line-height:16px;letter-spacing:-0.617px;transform-origin:0 0;transform:rotate(-90deg) translate(-100%,-50%);color:#08081c">August</span>
<span class="t" style="left:1392.6px;top:844.0px;font-size:14px;line-height:16px;letter-spacing:-0.647px;transform-origin:0 0;transform:rotate(-90deg) translate(-100%,-50%);color:#08081c">September</span>
<span class="t" style="left:1463.2px;top:842.8px;font-size:14px;line-height:16px;letter-spacing:-0.605px;transform-origin:0 0;transform:rotate(-90deg) translate(-100%,-50%);color:#08081c">Oktober</span>
<span class="t" style="left:1533.7px;top:843.7px;font-size:14px;line-height:16px;letter-spacing:-0.686px;transform-origin:0 0;transform:rotate(-90deg) translate(-100%,-50%);color:#08081c">November</span>
<span class="t" style="left:1604.2px;top:843.7px;font-size:14px;line-height:16px;letter-spacing:-0.686px;transform-origin:0 0;transform:rotate(-90deg) translate(-100%,-50%);color:#08081c">Dezember</span>
<div class="a " style="left:929.5px;top:953.3px;width:516.5px;height:25.3px;background:#b4b4b4;border-radius:2px"></div>
<div class="a " style="left:927.3px;top:951.2px;width:517.0px;height:25.3px;background:#fff;border:1px solid #333;border-radius:1.500px"></div>
<div class="a " style="left:935.0px;top:957.5px;width:11.5px;height:12.5px;background:#e68c30;border:1px solid #222"></div>
<span class="t " style="left:954.0px;top:954.6px;font-size:14px;line-height:18px;color:#08081c;letter-spacing:-0.447px;">bilanzierter Heizwärmebedarf (Geb.)</span>
<div class="a " style="left:1187.5px;top:957.5px;width:11.5px;height:12.5px;background:#003a8c;border:1px solid #222"></div>
<span class="t " style="left:1207.0px;top:954.6px;font-size:14px;line-height:18px;color:#08081c;letter-spacing:-0.472px;">bilanzierter Heizwärmebedarf (Zonen)</span>
<!-- right -->
<div class="a " style="left:1699.0px;top:73.0px;width:259.0px;height:1063.5px;background:#7f7f7f"></div>
<div class="a " style="left:1696.0px;top:73.0px;width:262.0px;height:20.8px;background:#f0f0f0"></div>
<div class="a " style="left:1696.0px;top:73.0px;width:1.5px;height:1086.0px;background:#f6f6f6"></div>
<div class="a " style="left:1699.0px;top:73.3px;width:237.3px;height:19.8px;background:#fff;border:1px solid #dadada;border-top-color:#f4f4f4;border-bottom-color:#8c8c8c;border-radius:2px"></div>
<span class="t " style="left:1702.5px;top:75.8px;font-size:11.6px;line-height:15px;color:#000;letter-spacing:-0.470px;">Heizung und Solaranlage (3)</span>
<svg class="a" style="left:1921.5px;top:80.5px;" width="9" height="6" viewBox="0 0 9 6"><path d="M0.500 0.700l4 4.300l4-4.300" fill="none" stroke="#444" stroke-width="1"/></svg>
<div class="a " style="left:1939.0px;top:73.5px;width:19.5px;height:19.5px;background:#fdfdfd;border:1px solid #d8d8d8;border-radius:3px"></div>
<svg class="a" style="left:1941.0px;top:76.0px;" width="16" height="16" viewBox="0 0 16 16"><rect x="0" y="0" width="16" height="15.900" fill="#063f94"/><path d="M1.300 14.500l.6-3.300l8.600-8.600l2.700 2.700l-8.600 8.600z" fill="#fff"/><path d="M11.300 1.800l1.100-1.100l2.700 2.700l-1.100 1.100z" fill="#fff"/></svg>
<div class="a " style="left:1702.0px;top:96.8px;width:256.0px;height:390.0px;background:#fff"></div>
<div class="a " style="left:1702.0px;top:492.0px;width:256.0px;height:118.5px;background:#fff"></div>
<div class="a " style="left:1702.0px;top:616.1px;width:256.0px;height:82.0px;background:#fff"></div>
<div class="a " style="left:1702.0px;top:704.0px;width:256.0px;height:111.9px;background:#fff"></div>
<div class="a " style="left:1702.0px;top:821.0px;width:256.0px;height:120.0px;background:#fff"></div>
<span class="t " style="left:1712.3px;top:103.8px;font-size:21.3px;line-height:28px;color:#1a1a1a;letter-spacing:-0.293px;">GEG 2024</span>
<span class="t " style="left:1712.5px;top:129.0px;font-size:16.4px;line-height:21px;color:#1a1a1a;letter-spacing:-0.437px;">DIN V 18599</span>
<div class="a " style="left:1920.7px;top:110.2px;width:21.0px;height:21.0px;background:#80b519;border-radius:50%"></div>
<div class="a " style="left:1716.0px;top:152.6px;width:227.1px;height:157.6px;background:#fff;box-shadow:0.500px 1.500px 2.500px rgba(0,0,0,.45);"></div>
<div class="a " style="left:1716.0px;top:152.6px;width:18.5px;height:157.6px;background:#d8d8d8"></div>
<span class="t" style="left:1723.6px;top:231.4px;font-size:10.8px;line-height:12px;transform:translate(-50%,-50%) rotate(-90deg);color:#000">Effizienzklasse</span>
<div class="a " style="left:1740.0px;top:152.6px;width:203.2px;height:157.6px;background:#80b519"></div>
<span class="t" style="left:1841.600px;top:226.200px;font-size:145.500px;line-height:150px;transform:translate(-50%,-50%) scale(0.947,1.029);color:#fff;text-shadow:0 1px 3px rgba(0,0,0,.35)">A</span>
<span class="t" style="left:1813px;top:283.500px;font-size:15.300px;line-height:18px;color:#fff;text-shadow:0.5px 1px 2px rgba(0,0,0,.5);letter-spacing:0.320px"><b>35,6</b> kWh/(m²a)</span>
<div class="a " style="left:1716.0px;top:318.0px;width:227.1px;height:59.0px;background:#fff;box-shadow:0.500px 1.500px 2.500px rgba(0,0,0,.45);"></div><div class="a " style="left:1716.0px;top:318.0px;width:18.5px;height:59.0px;background:#d8d8d8"></div><span class="t" style="left:1723.8px;top:347.5px;font-size:10px;line-height:12px;transform:translate(-50%,-50%) rotate(-90deg);color:#000">Q P</span>
<div class="a " style="left:1740.0px;top:318.0px;width:121.3px;height:19.3px;background:#d8d8d8"></div>
<div class="a " style="left:1740.0px;top:338.0px;width:170.2px;height:19.0px;background:#3d85b8"></div>
<div class="a " style="left:1740.0px;top:357.5px;width:25.0px;height:19.5px;background:linear-gradient(90deg,#4e8a06,#9cc41c)"></div>
<span class="t " style="left:1745.5px;top:321.0px;font-size:10.2px;line-height:13px;color:#000;letter-spacing:0.158px;">72,5 kWh/(m²a)</span>
<span class="t " style="left:1745.5px;top:341.0px;font-size:10.2px;line-height:13px;color:#000;letter-spacing:0.136px;">101,5 kWh/(m²a)</span>
<span class="t " style="left:1745.5px;top:360.5px;font-size:10.2px;line-height:13px;color:#000;letter-spacing:0.158px;">14,9 kWh/(m²a)</span>
<div class="a " style="left:1716.0px;top:383.7px;width:227.1px;height:59.3px;background:#fff;box-shadow:0.500px 1.500px 2.500px rgba(0,0,0,.45);"></div><div class="a " style="left:1716.0px;top:383.7px;width:18.5px;height:59.3px;background:#d8d8d8"></div><span class="t" style="left:1723.8px;top:413.3px;font-size:10px;line-height:12px;transform:translate(-50%,-50%) rotate(-90deg);color:#000">H T</span>
<div class="a " style="left:1740.0px;top:383.7px;width:103.2px;height:19.3px;background:#d8d8d8"></div>
<div class="a " style="left:1740.0px;top:403.5px;width:172.7px;height:19.3px;background:#3d85b8"></div>
<div class="a " style="left:1740.0px;top:423.2px;width:68.0px;height:19.8px;background:linear-gradient(90deg,#4e8a06,#c8dc28)"></div>
<span class="t " style="left:1745.5px;top:386.8px;font-size:10.2px;line-height:13px;color:#000;letter-spacing:0.155px;">0,42 W/(m²K)</span>
<span class="t " style="left:1745.5px;top:406.3px;font-size:10.2px;line-height:13px;color:#000;letter-spacing:0.155px;">0,70 W/(m²K)</span>
<span class="t " style="left:1745.5px;top:426.3px;font-size:10.2px;line-height:13px;color:#000;letter-spacing:0.155px;">0,28 W/(m²K)</span>
<div class="a " style="left:1716.0px;top:449.6px;width:227.1px;height:21.5px;background:#fff;box-shadow:0.500px 1.500px 2.500px rgba(0,0,0,.45);"></div><div class="a " style="left:1716.0px;top:449.6px;width:18.5px;height:21.5px;background:#d8d8d8"></div><span class="t" style="left:1723.8px;top:460.4px;font-size:10px;line-height:12px;transform:translate(-50%,-50%) rotate(-90deg);color:#000">EH</span>
<div class="a " style="left:1740.0px;top:449.8px;width:45.3px;height:21.1px;background:#b82020"></div>
<div class="a " style="left:1786.9px;top:449.8px;width:18.1px;height:21.1px;background:#80b519"></div>
<div class="a " style="left:1807.2px;top:449.8px;width:16.7px;height:21.1px;background:#80b519"></div>
<div class="a " style="left:1826.0px;top:449.8px;width:16.9px;height:21.1px;background:#80b519"></div>
<div class="a " style="left:1845.0px;top:449.8px;width:96.0px;height:21.1px;background:#b82020"></div>
<span class="t " style="right:172.7px;top:451.8px;font-size:10.5px;line-height:14px;color:#fff;font-weight:bold;letter-spacing:-0.150px;text-shadow:0 0 1px rgba(0,0,0,.25);">40</span>
<span class="t " style="right:152.7px;top:451.8px;font-size:10.5px;line-height:14px;color:#fff;font-weight:bold;letter-spacing:-0.150px;text-shadow:0 0 1px rgba(0,0,0,.25);">55</span>
<span class="t " style="right:133.9px;top:451.8px;font-size:10.5px;line-height:14px;color:#fff;font-weight:bold;letter-spacing:-0.150px;text-shadow:0 0 1px rgba(0,0,0,.25);">70</span>
<span class="t " style="right:114.9px;top:451.8px;font-size:10.5px;line-height:14px;color:#fff;font-weight:bold;letter-spacing:-0.150px;text-shadow:0 0 1px rgba(0,0,0,.25);">85</span>
<span class="t " style="right:17.4px;top:451.8px;font-size:10.5px;line-height:14px;color:#fff;font-weight:bold;letter-spacing:-0.150px;text-shadow:0 0 1px rgba(0,0,0,.25);">160</span>
<span class="t " style="left:1712.3px;top:498.8px;font-size:21.3px;line-height:28px;color:#1a1a1a;letter-spacing:-0.220px;">Erneuerbare</span>
<span class="t " style="left:1712.3px;top:523.1px;font-size:21.3px;line-height:28px;color:#1a1a1a;letter-spacing:-0.233px;">Energien</span>
<div class="a " style="left:1920.8px;top:505.2px;width:21.0px;height:21.0px;background:#80b519;border-radius:50%"></div>
<div class="a " style="left:1716.0px;top:555.0px;width:227.1px;height:39.8px;background:#fff;box-shadow:0.500px 1.500px 2.500px rgba(0,0,0,.45);"></div><div class="a " style="left:1716.0px;top:555.0px;width:18.5px;height:39.8px;background:#d8d8d8"></div><span class="t" style="left:1723.8px;top:574.9px;font-size:10px;line-height:12px;transform:translate(-50%,-50%) rotate(-90deg);color:#000">EE</span>
<div class="a " style="left:1740.0px;top:555.0px;width:131.3px;height:19.5px;background:#d8d8d8"></div>
<div class="a " style="left:1740.0px;top:575.0px;width:203.1px;height:19.8px;background:linear-gradient(90deg,#b82020,#e8872f 25%,#ffd92e 50%,#a8d228 75%,#569608)"></div>
<span class="t " style="left:1745.5px;top:558.0px;font-size:10.2px;line-height:13px;color:#000;letter-spacing:0.313px;">65 %</span>
<span class="t " style="left:1745.5px;top:578.3px;font-size:10.2px;line-height:13px;color:#000;letter-spacing:0.216px;">100 %</span>
<span class="t " style="left:1712.3px;top:622.9px;font-size:21.3px;line-height:28px;color:#1a1a1a;letter-spacing:-0.199px;">Sommerlicher</span>
<span class="t " style="left:1712.3px;top:647.8px;font-size:21.3px;line-height:28px;color:#1a1a1a;letter-spacing:-0.281px;">Wärmeschutz</span>
<span class="t " style="left:1712.5px;top:673.6px;font-size:16.4px;line-height:21px;color:#1a1a1a;letter-spacing:-0.407px;">DIN 4108-2</span>
<div class="a " style="left:1921.0px;top:628.9px;width:21.2px;height:21.2px;background:#fff;border:1.300px solid #111;border-radius:50%"></div>
<span class="t " style="left:1712.3px;top:709.9px;font-size:21.3px;line-height:28px;color:#1a1a1a;letter-spacing:-0.261px;">Lüftungskonzept</span>
<span class="t " style="left:1712.5px;top:735.7px;font-size:16.4px;line-height:21px;color:#1a1a1a;letter-spacing:-0.397px;">DIN 1946-6</span>
<div class="a " style="left:1920.8px;top:716.9px;width:21.0px;height:21.0px;background:#80b519;border-radius:50%"></div>
<div class="a " style="left:1716.0px;top:759.8px;width:227.1px;height:39.7px;background:#fff;box-shadow:0.500px 1.500px 2.500px rgba(0,0,0,.45);"></div><div class="a " style="left:1716.0px;top:759.8px;width:18.5px;height:39.7px;background:#d8d8d8"></div><span class="t" style="left:1723.8px;top:779.6px;font-size:10px;line-height:12px;transform:translate(-50%,-50%) rotate(-90deg);color:#000">inf min</span>
<div class="a " style="left:1740.0px;top:759.8px;width:101.0px;height:19.7px;background:#d8d8d8"></div>
<div class="a " style="left:1740.0px;top:780.0px;width:34.6px;height:19.5px;background:linear-gradient(90deg,#3d85b8,#5c9cca)"></div>
<span class="t " style="left:1745.5px;top:763.0px;font-size:10.2px;line-height:13px;color:#000;letter-spacing:0.203px;">39 m³/h</span>
<span class="t " style="left:1745.5px;top:783.0px;font-size:10.2px;line-height:13px;color:#000;letter-spacing:0.203px;">13 m³/h</span>
<span class="t " style="left:1712.3px;top:827.7px;font-size:21.3px;line-height:28px;color:#1a1a1a;letter-spacing:-0.344px;">Beratung</span>
<span class="t " style="left:1712.5px;top:852.6px;font-size:16.4px;line-height:21px;color:#1a1a1a;letter-spacing:-0.418px;">DIN V 18599</span>
<div class="a " style="left:1716.0px;top:878.2px;width:227.1px;height:19.5px;background:#fff;box-shadow:0.500px 1.500px 2.500px rgba(0,0,0,.45);"></div><div class="a " style="left:1716.0px;top:878.2px;width:18.5px;height:19.5px;background:#d8d8d8"></div><span class="t" style="left:1723.8px;top:888.0px;font-size:9.5px;line-height:12px;transform:translate(-50%,-50%) rotate(-90deg);color:#000">Qf</span>
<div class="a " style="left:1740.0px;top:878.2px;width:29.0px;height:19.5px;background:linear-gradient(90deg,#4e8a06,#8cc01c)"></div>
<span class="t " style="left:1745.5px;top:881.3px;font-size:10.2px;line-height:13px;color:#000;letter-spacing:0.158px;">29,0 kWh/(m²a)</span>
<div class="a " style="left:1716.0px;top:905.0px;width:227.1px;height:19.5px;background:#fff;box-shadow:0.500px 1.500px 2.500px rgba(0,0,0,.45);"></div><div class="a " style="left:1716.0px;top:905.0px;width:18.5px;height:19.5px;background:#d8d8d8"></div><span class="t" style="left:1723.8px;top:914.8px;font-size:9px;line-height:12px;transform:translate(-50%,-50%) rotate(-90deg);color:#000">CO2</span>
<div class="a " style="left:1740.0px;top:905.0px;width:8.8px;height:19.5px;background:linear-gradient(90deg,#4e8a06,#7cb01c)"></div>
<span class="t " style="left:1745.5px;top:908.0px;font-size:10.2px;line-height:13px;color:#000;letter-spacing:0.104px;">3,57 kg/(m²a)</span>
</body></html>
